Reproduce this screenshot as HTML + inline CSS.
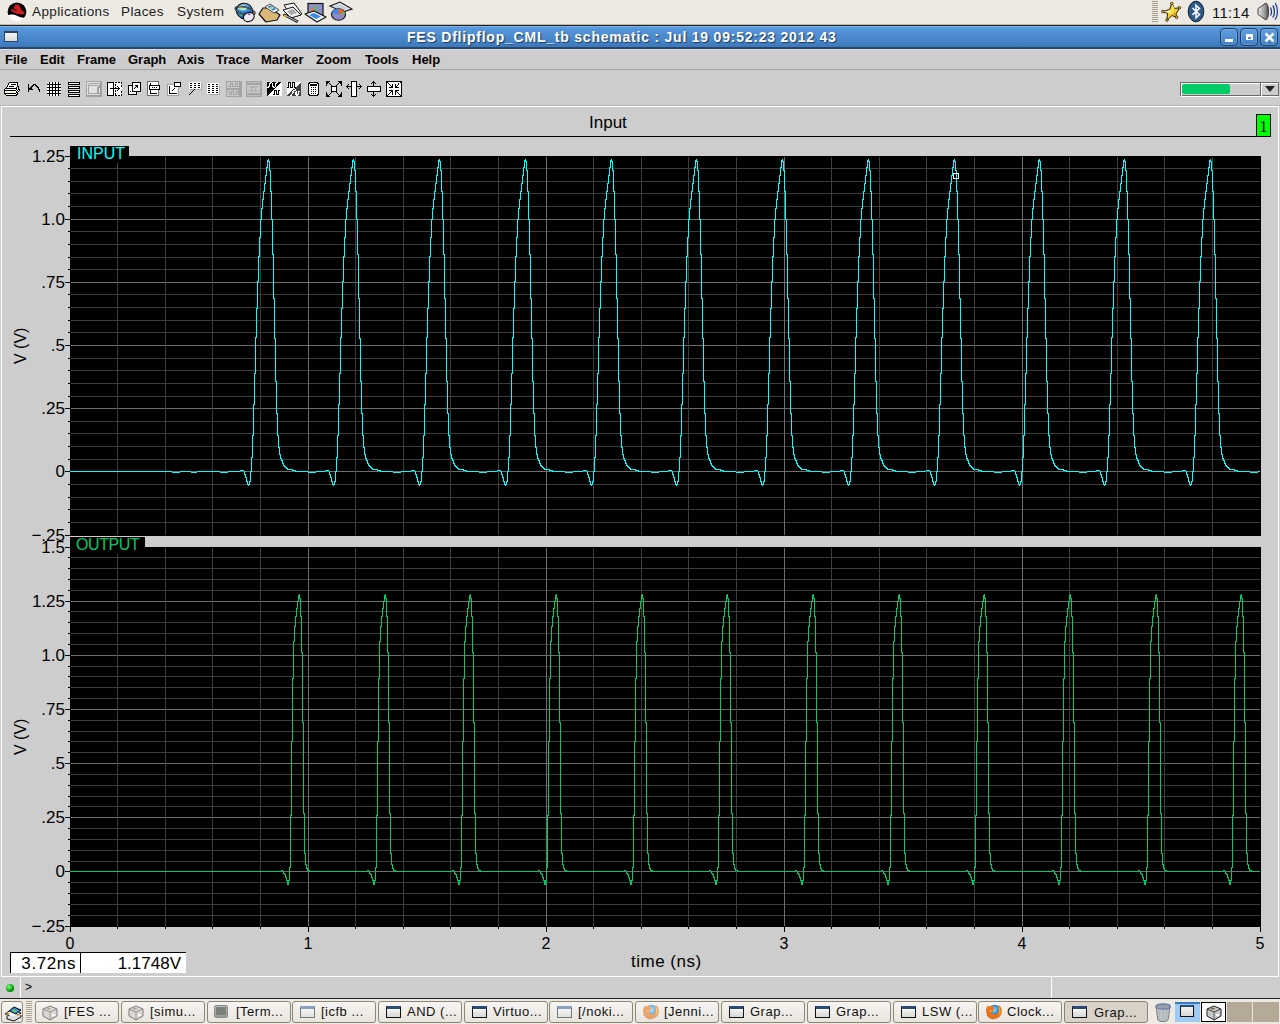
<!DOCTYPE html>
<html><head><meta charset="utf-8"><style>
*{margin:0;padding:0;box-sizing:border-box}
html,body{width:1280px;height:1024px;overflow:hidden;background:#cdcdcd;font-family:"Liberation Sans", sans-serif;position:relative}
.a{position:absolute}
#panel{left:0;top:0;width:1280px;height:26px;background:#edeae4;border-bottom:1px solid #1c2128;box-shadow:inset 0 -1px 0 #c8b8a0}
#panel .pt{position:absolute;top:3px;font-size:13.5px;color:#1a1a1a;line-height:18px;letter-spacing:0.4px}
#title{left:0;top:26px;width:1280px;height:23px;background:linear-gradient(#7ab4ee 0,#7ab4ee 1px,#5a9ade 1px,#3d78bc 21px,#26486e 21px)}
#ttext{position:absolute;left:407px;top:3px;white-space:nowrap;color:#fff;font-weight:bold;font-size:14px;letter-spacing:0.78px;line-height:16px;text-shadow:1px 1px 1px #1e3a5a}
#menubar{left:0;top:49px;width:1280px;height:21px;background:#cdcdcd;border-bottom:1px solid #a6a6a6;box-shadow:inset 0 1px 0 #dcdcdc}
.mi{position:absolute;top:3px;font-size:13px;font-weight:bold;color:#000;line-height:16px}
.yl{position:absolute;left:0;width:65px;text-align:right;font-size:17px;line-height:20px;color:#000}
.xl{position:absolute;top:934px;width:40px;text-align:center;font-size:16px;line-height:20px;color:#000}
.tbb{border:1px solid #8f8676;border-radius:3px;background:linear-gradient(#f7f5f2,#e8e4dd)}
.tbb.act{background:#d8d2c8;border-color:#8b8274}
.tbt{position:absolute;top:1004px;font-size:13px;line-height:16px;white-space:nowrap;color:#111;letter-spacing:0.5px}
</style></head><body>
<div id="panel" class="a">
  <svg class="a" style="left:0;top:0" width="32" height="25">
<defs><clipPath id="rhc"><circle cx="17" cy="11.8" r="9.4"/></clipPath></defs>
<circle cx="17" cy="11.8" r="9.4" fill="#fff"/>
<g clip-path="url(#rhc)">
<path d="M6 2h24v13c-3 2-5 3-8 2.5c-3-0.5-6-2.5-9-3c-2-0.3-4 0.5-7 1z" fill="#000"/>
<path d="M10.5 9.5c1-1 2-0.5 3-0.2c0.3-2 1-4.5 3-4.8c2-0.3 3.5 1 4 3.5c0.5 2 1.5 3 3 3.6c1.5 0.6 1.5 1.8 0.5 2.3c-2 1-5 0.5-8-0.5c-3-1-5-2.3-5.5-3.9z" fill="#cc1f24"/>
<path d="M13.3 9.3c1.2 0.4 2.2 0.8 3.3 1" stroke="#000" stroke-width="1" fill="none"/>
</g>
</svg><svg class="a" style="left:232px;top:0" width="124" height="25">
<!-- globe -->
<defs><linearGradient id="glb" x1="0" y1="0" x2="1" y2="1"><stop offset="0" stop-color="#8fd0ff"/><stop offset="0.5" stop-color="#3a8ae8"/><stop offset="1" stop-color="#0a2a8a"/></linearGradient></defs>
<ellipse cx="12.5" cy="11" rx="8.3" ry="7.6" transform="rotate(25 12.5 11)" fill="url(#glb)" stroke="#111" stroke-width="1.1"/>
<ellipse cx="10.5" cy="7.8" rx="4.6" ry="2.6" transform="rotate(10 10.5 7.8)" fill="#b0e8b0"/>
<path d="M7 13.5l3 1.5l1 1.5l-2.5-0.5z" fill="#40b050"/>
<ellipse cx="13" cy="10.8" rx="10" ry="3.6" transform="rotate(14 13 10.8)" fill="none" stroke="#111" stroke-width="1.6"/>
<ellipse cx="13" cy="10.8" rx="10" ry="3.6" transform="rotate(14 13 10.8)" fill="none" stroke="#999" stroke-width="0.6"/>
<ellipse cx="16.8" cy="17" rx="5.6" ry="4.4" transform="rotate(-25 16.8 17)" fill="#ececf0" stroke="#111" stroke-width="1.1"/>
<ellipse cx="17.3" cy="14.3" rx="1.3" ry="0.7" fill="#3a3aa8"/>
<!-- envelope -->
<path d="M27 14l4-6h7l10 7l-3 5l-11 2z" fill="#d9b878" stroke="#111" stroke-width="1.2" stroke-linejoin="round"/>
<path d="M33 7l5-3l9 6l-5 3z" fill="#fff" stroke="#333" stroke-width="0.9"/>
<path d="M35.5 7l3-1.8l5.5 3.8l-3 1.8z" fill="#3a7ad0"/>
<ellipse cx="39.5" cy="8" rx="2" ry="1.2" fill="#a8e0a0"/>
<!-- writer -->
<path d="M52 5l10-2l8 11l-10 3z" fill="#f6f6f6" stroke="#111" stroke-width="1"/>
<path d="M51 10l10-3l8 8l-10 3z" fill="#f0f0f0" stroke="#111" stroke-width="1"/>
<path d="M55 11l6-2l4 4l-6 2z" fill="#aaa"/>
<path d="M51 15l2-1l13 7l-1 1.5z" fill="#c8c8ec" stroke="#111" stroke-width="1"/>
<path d="M52 14.5l3 1.5l-1 2l-2.5-1.5z" fill="#e0b010"/>
<!-- impress -->
<rect x="76" y="3.5" width="15" height="12" fill="#8e8ec8" stroke="#111" stroke-width="1.2"/>
<rect x="79" y="8" width="2.5" height="5" fill="#f07040"/>
<rect x="82" y="5.5" width="2.5" height="7.5" fill="#50c060"/>
<path d="M73 14l9-3l12 6l-9 5z" fill="#f4f4f4" stroke="#111" stroke-width="1.2" stroke-linejoin="round"/>
<path d="M77 15l5-2l7 3.5l-5 2.5z" fill="#3a8ae8"/>
<!-- calc / pie -->
<path d="M98 6l10-4l12 7l-9 3z" fill="#e6e6e6" stroke="#111" stroke-width="1.1"/>
<path d="M101 7l7-3l8 4.5l-7 2.5z" fill="#a8c8e0" opacity="0.6"/>
<ellipse cx="106.5" cy="14.5" rx="7" ry="5.8" fill="#8a8ac8" stroke="#111" stroke-width="1.1"/>
<path d="M106.5 14.5l-6.5-2c1-3 3-4 6.5-3.8z" fill="#3a8ae8"/>
<path d="M106.5 14.5v-5.8c2.5 0 5 1.2 6 3z" fill="#f06030"/>
<path d="M106.5 14.5l6-2.8c0.5 0.8 0.7 1.6 0.7 2.4z" fill="#50c060"/>
</svg><div class="a" style="left:1152px;top:1px;width:6px;height:22px;background:repeating-linear-gradient(#a89e8e 0 1px,transparent 1px 2px)"></div>
<svg class="a" style="left:1158px;top:0" width="122" height="25">
<path d="M13.8 3.5L16.5 8.5L21.6 7.7L18.5 13L18.5 17.4L14 15.5L9 20.2L9.5 13.5L4.7 11.5L11.5 9.5z" fill="#f2d22a" stroke="#2a2410" stroke-width="1" stroke-linejoin="round"/>
<path d="M5.5 11.5L11.5 10.5L14.5 13.5z" fill="#fffbe0"/>
<path d="M14.5 13.5L18.5 13L18.5 17.4z" fill="#d89010"/>
<path d="M13.8 4L14.5 13.5L16.5 8.5z" fill="#f8e870"/>
<circle cx="13.8" cy="3.6" r="1.3" fill="#e8b820" stroke="#2a2410" stroke-width="0.8"/>
<circle cx="21.4" cy="7.8" r="1.3" fill="#e8b820" stroke="#2a2410" stroke-width="0.8"/>
<circle cx="4.8" cy="11.5" r="1.3" fill="#e8b820" stroke="#2a2410" stroke-width="0.8"/>
<circle cx="9" cy="20" r="1.3" fill="#e8b820" stroke="#2a2410" stroke-width="0.8"/>
<circle cx="18.6" cy="17.3" r="1.3" fill="#e8b820" stroke="#2a2410" stroke-width="0.8"/>
<ellipse cx="38" cy="11.5" rx="7.8" ry="10.3" fill="#2e5a86" stroke="#0c1c2c" stroke-width="1"/>
<path d="M34.5 8l7 6.5l-3.5 3.2v-12.5l3.5 3.2l-7 6.5" fill="none" stroke="#fff" stroke-width="1.5"/>
<defs><linearGradient id="spk" x1="0" y1="0" x2="1" y2="0"><stop offset="0" stop-color="#e8e8e8"/><stop offset="0.6" stop-color="#a0a0a0"/><stop offset="1" stop-color="#505050"/></linearGradient></defs>
<path d="M100 9.5c0-1.5 1-2 2.5-2.5l4.5-3.5c2-1 3.5 2 3.5 8s-1.5 9-3.5 8l-4.5-3.5c-1.5-0.5-2.5-1-2.5-2.5z" fill="url(#spk)" stroke="#2a2a2a" stroke-width="0.9"/>
<path d="M112.5 7.5c1.3 2 1.3 6 0 8M114.8 5.5c2.2 3 2.2 9 0 12M117.2 3.2c3 4 3 12.5 0 16.5" fill="none" stroke="#1c3c8c" stroke-width="1.3"/>
</svg>
<div class="a" style="left:1212px;top:4px;font-size:15px;line-height:18px;color:#111;letter-spacing:0.2px">11:14</div>
  <div class="pt" style="left:32px">Applications</div>
  <div class="pt" style="left:121px">Places</div>
  <div class="pt" style="left:177px">System</div>
</div>
<div id="title" class="a">
  <div class="a" style="left:4px;top:5px;width:14px;height:11px;background:linear-gradient(#f4f4f4,#dcdcdc);border:1px solid #28466a;border-top-width:2px"></div>
  <div id="ttext">FES Dflipflop_CML_tb schematic : Jul 19 09:52:23 2012 43</div>
  <div class="a" style="left:1220px;top:2px;width:18px;height:18px;border:1px solid #24405e;border-radius:4px;background:linear-gradient(#5f9fe0,#4080c8);box-shadow:inset 0 0 0 1px rgba(140,190,240,0.35)"></div><div class="a" style="left:1240px;top:2px;width:18px;height:18px;border:1px solid #24405e;border-radius:4px;background:linear-gradient(#5f9fe0,#4080c8);box-shadow:inset 0 0 0 1px rgba(140,190,240,0.35)"></div><div class="a" style="left:1260px;top:2px;width:18px;height:18px;border:1px solid #24405e;border-radius:4px;background:linear-gradient(#5f9fe0,#4080c8);box-shadow:inset 0 0 0 1px rgba(140,190,240,0.35)"></div><div class="a" style="left:1225px;top:13px;width:8px;height:3px;background:#fff"></div><div class="a" style="left:1246px;top:8px;width:7px;height:6px;border:2px solid #fff;border-width:3px 2px 1px 2px"></div><svg class="a" style="left:1260px;top:2px" width="20" height="20"><path d="M5.5 5.5l8 8M13.5 5.5l-8 8" stroke="#fff" stroke-width="2.6"/></svg>
</div>
<div id="menubar" class="a"><div class="mi" style="left:5px">File</div><div class="mi" style="left:40px">Edit</div><div class="mi" style="left:77px">Frame</div><div class="mi" style="left:128px">Graph</div><div class="mi" style="left:177px">Axis</div><div class="mi" style="left:216px">Trace</div><div class="mi" style="left:261px">Marker</div><div class="mi" style="left:316px">Zoom</div><div class="mi" style="left:365px">Tools</div><div class="mi" style="left:412px">Help</div></div>
<!-- graph frame -->
<div class="a" style="left:0;top:105px;width:1280px;height:1px;background:#bababa"></div>
<div class="a" style="left:1px;top:106px;width:1278px;height:871px;border:1px solid #fff"></div>
<div class="a" style="left:589px;top:113px;font-size:17px;line-height:20px;color:#000">Input</div>
<div class="a" style="left:10px;top:136px;width:1246px;height:1px;background:#000"></div>
<div class="a" style="left:1256px;top:114px;width:15px;height:23px;border:1px solid #000;background:#00ff00;font-family:'Liberation Serif',serif;font-size:16px;line-height:20px;text-align:center;padding-top:2px">1</div>
<svg class="a" style="left:0;top:0" width="1280" height="1024" shape-rendering="crispEdges"><rect x="70" y="156" width="1191" height="380" fill="#000"/><rect x="70" y="146" width="59" height="17" fill="#000"/><rect x="71" y="168" width="1189" height="1" fill="#3c3c3c"/><rect x="71" y="181" width="1189" height="1" fill="#3c3c3c"/><rect x="71" y="193" width="1189" height="1" fill="#3c3c3c"/><rect x="71" y="206" width="1189" height="1" fill="#3c3c3c"/><rect x="71" y="219" width="1189" height="1" fill="#6e6e6e"/><rect x="71" y="231" width="1189" height="1" fill="#3c3c3c"/><rect x="71" y="244" width="1189" height="1" fill="#3c3c3c"/><rect x="71" y="257" width="1189" height="1" fill="#3c3c3c"/><rect x="71" y="269" width="1189" height="1" fill="#3c3c3c"/><rect x="71" y="282" width="1189" height="1" fill="#6e6e6e"/><rect x="71" y="294" width="1189" height="1" fill="#3c3c3c"/><rect x="71" y="307" width="1189" height="1" fill="#3c3c3c"/><rect x="71" y="320" width="1189" height="1" fill="#3c3c3c"/><rect x="71" y="332" width="1189" height="1" fill="#3c3c3c"/><rect x="71" y="345" width="1189" height="1" fill="#6e6e6e"/><rect x="71" y="358" width="1189" height="1" fill="#3c3c3c"/><rect x="71" y="370" width="1189" height="1" fill="#3c3c3c"/><rect x="71" y="383" width="1189" height="1" fill="#3c3c3c"/><rect x="71" y="396" width="1189" height="1" fill="#3c3c3c"/><rect x="71" y="408" width="1189" height="1" fill="#6e6e6e"/><rect x="71" y="421" width="1189" height="1" fill="#3c3c3c"/><rect x="71" y="433" width="1189" height="1" fill="#3c3c3c"/><rect x="71" y="446" width="1189" height="1" fill="#3c3c3c"/><rect x="71" y="459" width="1189" height="1" fill="#3c3c3c"/><rect x="71" y="471" width="1189" height="1" fill="#6e6e6e"/><rect x="71" y="484" width="1189" height="1" fill="#3c3c3c"/><rect x="71" y="497" width="1189" height="1" fill="#3c3c3c"/><rect x="71" y="509" width="1189" height="1" fill="#3c3c3c"/><rect x="71" y="522" width="1189" height="1" fill="#3c3c3c"/><rect x="117" y="163" width="1" height="372" fill="#3c3c3c"/><rect x="165" y="157" width="1" height="378" fill="#3c3c3c"/><rect x="212" y="157" width="1" height="378" fill="#3c3c3c"/><rect x="260" y="157" width="1" height="378" fill="#3c3c3c"/><rect x="308" y="157" width="1" height="378" fill="#6e6e6e"/><rect x="355" y="157" width="1" height="378" fill="#3c3c3c"/><rect x="403" y="157" width="1" height="378" fill="#3c3c3c"/><rect x="450" y="157" width="1" height="378" fill="#3c3c3c"/><rect x="498" y="157" width="1" height="378" fill="#3c3c3c"/><rect x="546" y="157" width="1" height="378" fill="#6e6e6e"/><rect x="593" y="157" width="1" height="378" fill="#3c3c3c"/><rect x="641" y="157" width="1" height="378" fill="#3c3c3c"/><rect x="688" y="157" width="1" height="378" fill="#3c3c3c"/><rect x="736" y="157" width="1" height="378" fill="#3c3c3c"/><rect x="784" y="157" width="1" height="378" fill="#6e6e6e"/><rect x="831" y="157" width="1" height="378" fill="#3c3c3c"/><rect x="879" y="157" width="1" height="378" fill="#3c3c3c"/><rect x="926" y="157" width="1" height="378" fill="#3c3c3c"/><rect x="974" y="157" width="1" height="378" fill="#3c3c3c"/><rect x="1022" y="157" width="1" height="378" fill="#6e6e6e"/><rect x="1069" y="157" width="1" height="378" fill="#3c3c3c"/><rect x="1117" y="157" width="1" height="378" fill="#3c3c3c"/><rect x="1164" y="157" width="1" height="378" fill="#3c3c3c"/><rect x="1212" y="157" width="1" height="378" fill="#3c3c3c"/><rect x="65" y="156" width="5" height="1" fill="#000"/><rect x="68" y="168" width="2" height="1" fill="#000"/><rect x="68" y="181" width="2" height="1" fill="#000"/><rect x="68" y="193" width="2" height="1" fill="#000"/><rect x="68" y="206" width="2" height="1" fill="#000"/><rect x="65" y="219" width="5" height="1" fill="#000"/><rect x="68" y="231" width="2" height="1" fill="#000"/><rect x="68" y="244" width="2" height="1" fill="#000"/><rect x="68" y="257" width="2" height="1" fill="#000"/><rect x="68" y="269" width="2" height="1" fill="#000"/><rect x="65" y="282" width="5" height="1" fill="#000"/><rect x="68" y="294" width="2" height="1" fill="#000"/><rect x="68" y="307" width="2" height="1" fill="#000"/><rect x="68" y="320" width="2" height="1" fill="#000"/><rect x="68" y="332" width="2" height="1" fill="#000"/><rect x="65" y="345" width="5" height="1" fill="#000"/><rect x="68" y="358" width="2" height="1" fill="#000"/><rect x="68" y="370" width="2" height="1" fill="#000"/><rect x="68" y="383" width="2" height="1" fill="#000"/><rect x="68" y="396" width="2" height="1" fill="#000"/><rect x="65" y="408" width="5" height="1" fill="#000"/><rect x="68" y="421" width="2" height="1" fill="#000"/><rect x="68" y="433" width="2" height="1" fill="#000"/><rect x="68" y="446" width="2" height="1" fill="#000"/><rect x="68" y="459" width="2" height="1" fill="#000"/><rect x="65" y="471" width="5" height="1" fill="#000"/><rect x="68" y="484" width="2" height="1" fill="#000"/><rect x="68" y="497" width="2" height="1" fill="#000"/><rect x="68" y="509" width="2" height="1" fill="#000"/><rect x="68" y="522" width="2" height="1" fill="#000"/><rect x="65" y="535" width="5" height="1" fill="#000"/><path d="M70 471h102v1h-102zM172 472h8v1h-8zM180 471h11v1h-11zM191 472h6v1h-6zM197 471h23v1h-23zM220 472h8v1h-8zM228 471h12v1h-12zM240 470h4v1h-4zM244 471h1v4h-1zM245 474h1v4h-1zM246 477h1v5h-1zM247 481h1v4h-1zM248 484h1v2h-1zM249 481h1v4h-1zM250 471h1v11h-1zM251 457h1v15h-1zM252 435h1v23h-1zM253 404h1v32h-1zM254 373h1v32h-1zM255 337h1v37h-1zM256 308h1v30h-1zM257 281h1v28h-1zM258 256h1v26h-1zM259 237h1v20h-1zM260 219h1v19h-1zM261 208h1v12h-1zM262 199h1v10h-1zM263 191h1v9h-1zM264 183h1v9h-1zM265 175h1v9h-1zM266 167h1v9h-1zM267 160h1v8h-1zM268 159h1v3h-1zM269 161h1v10h-1zM270 170h1v22h-1zM271 191h1v29h-1zM272 219h1v36h-1zM273 254h1v45h-1zM274 298h1v41h-1zM275 338h1v44h-1zM276 381h1v33h-1zM277 413h1v23h-1zM278 435h1v13h-1zM279 447h1v8h-1zM280 454h1v5h-1zM281 458h1v3h-1zM282 460h1v4h-1zM283 463h1v3h-1zM284 465h1v2h-1zM285 466h1v2h-1zM286 467h1v2h-1zM287 468h1v2h-1zM288 469h4v1h-4zM292 469h1v2h-1zM293 470h2v1h-2zM295 470h1v2h-1zM296 471h12v1h-12zM308 472h8v1h-8zM316 471h9v1h-9zM325 470h4v1h-4zM329 471h1v4h-1zM330 474h1v4h-1zM331 477h1v5h-1zM332 481h1v4h-1zM333 484h1v2h-1zM334 481h1v4h-1zM335 471h1v11h-1zM336 457h1v15h-1zM337 435h1v23h-1zM338 404h1v32h-1zM339 373h1v32h-1zM340 337h1v37h-1zM341 308h1v30h-1zM342 281h1v28h-1zM343 256h1v26h-1zM344 237h1v20h-1zM345 219h1v19h-1zM346 208h1v12h-1zM347 199h1v10h-1zM348 191h1v9h-1zM349 183h1v9h-1zM350 175h1v9h-1zM351 167h1v9h-1zM352 160h1v8h-1zM353 159h1v3h-1zM354 161h1v10h-1zM355 170h1v22h-1zM356 191h1v29h-1zM357 219h1v36h-1zM358 254h1v45h-1zM359 298h1v41h-1zM360 338h1v44h-1zM361 381h1v33h-1zM362 413h1v23h-1zM363 435h1v13h-1zM364 447h1v8h-1zM365 454h1v5h-1zM366 458h1v3h-1zM367 460h1v4h-1zM368 463h1v3h-1zM369 465h1v2h-1zM370 466h1v2h-1zM371 467h1v2h-1zM372 468h1v2h-1zM373 469h4v1h-4zM377 469h1v2h-1zM378 470h2v1h-2zM380 470h1v2h-1zM381 471h12v1h-12zM393 472h8v1h-8zM401 471h10v1h-10zM411 470h4v1h-4zM415 471h1v4h-1zM416 474h1v4h-1zM417 477h1v5h-1zM418 481h1v4h-1zM419 484h1v2h-1zM420 481h1v4h-1zM421 471h1v11h-1zM422 457h1v15h-1zM423 435h1v23h-1zM424 404h1v32h-1zM425 373h1v32h-1zM426 337h1v37h-1zM427 308h1v30h-1zM428 281h1v28h-1zM429 256h1v26h-1zM430 237h1v20h-1zM431 219h1v19h-1zM432 208h1v12h-1zM433 199h1v10h-1zM434 191h1v9h-1zM435 183h1v9h-1zM436 175h1v9h-1zM437 167h1v9h-1zM438 160h1v8h-1zM439 159h1v3h-1zM440 161h1v10h-1zM441 170h1v22h-1zM442 191h1v29h-1zM443 219h1v36h-1zM444 254h1v45h-1zM445 298h1v41h-1zM446 338h1v44h-1zM447 381h1v33h-1zM448 413h1v23h-1zM449 435h1v13h-1zM450 447h1v8h-1zM451 454h1v5h-1zM452 458h1v3h-1zM453 460h1v4h-1zM454 463h1v3h-1zM455 465h1v2h-1zM456 466h1v2h-1zM457 467h1v2h-1zM458 468h1v2h-1zM459 469h4v1h-4zM463 469h1v2h-1zM464 470h2v1h-2zM466 470h1v2h-1zM467 471h12v1h-12zM479 472h8v1h-8zM487 471h10v1h-10zM497 470h4v1h-4zM501 471h1v4h-1zM502 474h1v4h-1zM503 477h1v5h-1zM504 481h1v4h-1zM505 484h1v2h-1zM506 481h1v4h-1zM507 471h1v11h-1zM508 457h1v15h-1zM509 435h1v23h-1zM510 404h1v32h-1zM511 373h1v32h-1zM512 337h1v37h-1zM513 308h1v30h-1zM514 281h1v28h-1zM515 256h1v26h-1zM516 237h1v20h-1zM517 219h1v19h-1zM518 208h1v12h-1zM519 199h1v10h-1zM520 191h1v9h-1zM521 183h1v9h-1zM522 175h1v9h-1zM523 167h1v9h-1zM524 160h1v8h-1zM525 159h1v3h-1zM526 161h1v10h-1zM527 170h1v22h-1zM528 191h1v29h-1zM529 219h1v36h-1zM530 254h1v45h-1zM531 298h1v41h-1zM532 338h1v44h-1zM533 381h1v33h-1zM534 413h1v23h-1zM535 435h1v13h-1zM536 447h1v8h-1zM537 454h1v5h-1zM538 458h1v3h-1zM539 460h1v4h-1zM540 463h1v3h-1zM541 465h1v2h-1zM542 466h1v2h-1zM543 467h1v2h-1zM544 468h1v2h-1zM545 469h4v1h-4zM549 469h1v2h-1zM550 470h2v1h-2zM552 470h1v2h-1zM553 471h12v1h-12zM565 472h8v1h-8zM573 471h10v1h-10zM583 470h4v1h-4zM587 471h1v4h-1zM588 474h1v4h-1zM589 477h1v5h-1zM590 481h1v4h-1zM591 484h1v2h-1zM592 481h1v4h-1zM593 471h1v11h-1zM594 457h1v15h-1zM595 435h1v23h-1zM596 404h1v32h-1zM597 373h1v32h-1zM598 337h1v37h-1zM599 308h1v30h-1zM600 281h1v28h-1zM601 256h1v26h-1zM602 237h1v20h-1zM603 219h1v19h-1zM604 208h1v12h-1zM605 199h1v10h-1zM606 191h1v9h-1zM607 183h1v9h-1zM608 175h1v9h-1zM609 167h1v9h-1zM610 160h1v8h-1zM611 159h1v3h-1zM612 161h1v10h-1zM613 170h1v22h-1zM614 191h1v29h-1zM615 219h1v36h-1zM616 254h1v45h-1zM617 298h1v41h-1zM618 338h1v44h-1zM619 381h1v33h-1zM620 413h1v23h-1zM621 435h1v13h-1zM622 447h1v8h-1zM623 454h1v5h-1zM624 458h1v3h-1zM625 460h1v4h-1zM626 463h1v3h-1zM627 465h1v2h-1zM628 466h1v2h-1zM629 467h1v2h-1zM630 468h1v2h-1zM631 469h4v1h-4zM635 469h1v2h-1zM636 470h2v1h-2zM638 470h1v2h-1zM639 471h12v1h-12zM651 472h8v1h-8zM659 471h9v1h-9zM668 470h4v1h-4zM672 471h1v4h-1zM673 474h1v4h-1zM674 477h1v5h-1zM675 481h1v4h-1zM676 484h1v2h-1zM677 481h1v4h-1zM678 471h1v11h-1zM679 457h1v15h-1zM680 435h1v23h-1zM681 404h1v32h-1zM682 373h1v32h-1zM683 337h1v37h-1zM684 308h1v30h-1zM685 281h1v28h-1zM686 256h1v26h-1zM687 237h1v20h-1zM688 219h1v19h-1zM689 208h1v12h-1zM690 199h1v10h-1zM691 191h1v9h-1zM692 183h1v9h-1zM693 175h1v9h-1zM694 167h1v9h-1zM695 160h1v8h-1zM696 159h1v3h-1zM697 161h1v10h-1zM698 170h1v22h-1zM699 191h1v29h-1zM700 219h1v36h-1zM701 254h1v45h-1zM702 298h1v41h-1zM703 338h1v44h-1zM704 381h1v33h-1zM705 413h1v23h-1zM706 435h1v13h-1zM707 447h1v8h-1zM708 454h1v5h-1zM709 458h1v3h-1zM710 460h1v4h-1zM711 463h1v3h-1zM712 465h1v2h-1zM713 466h1v2h-1zM714 467h1v2h-1zM715 468h1v2h-1zM716 469h4v1h-4zM720 469h1v2h-1zM721 470h2v1h-2zM723 470h1v2h-1zM724 471h12v1h-12zM736 472h8v1h-8zM744 471h10v1h-10zM754 470h4v1h-4zM758 471h1v4h-1zM759 474h1v4h-1zM760 477h1v5h-1zM761 481h1v4h-1zM762 484h1v2h-1zM763 481h1v4h-1zM764 471h1v11h-1zM765 457h1v15h-1zM766 435h1v23h-1zM767 404h1v32h-1zM768 373h1v32h-1zM769 337h1v37h-1zM770 308h1v30h-1zM771 281h1v28h-1zM772 256h1v26h-1zM773 237h1v20h-1zM774 219h1v19h-1zM775 208h1v12h-1zM776 199h1v10h-1zM777 191h1v9h-1zM778 183h1v9h-1zM779 175h1v9h-1zM780 167h1v9h-1zM781 160h1v8h-1zM782 159h1v3h-1zM783 161h1v10h-1zM784 170h1v22h-1zM785 191h1v29h-1zM786 219h1v36h-1zM787 254h1v45h-1zM788 298h1v41h-1zM789 338h1v44h-1zM790 381h1v33h-1zM791 413h1v23h-1zM792 435h1v13h-1zM793 447h1v8h-1zM794 454h1v5h-1zM795 458h1v3h-1zM796 460h1v4h-1zM797 463h1v3h-1zM798 465h1v2h-1zM799 466h1v2h-1zM800 467h1v2h-1zM801 468h1v2h-1zM802 469h4v1h-4zM806 469h1v2h-1zM807 470h2v1h-2zM809 470h1v2h-1zM810 471h12v1h-12zM822 472h8v1h-8zM830 471h10v1h-10zM840 470h4v1h-4zM844 471h1v4h-1zM845 474h1v4h-1zM846 477h1v5h-1zM847 481h1v4h-1zM848 484h1v2h-1zM849 481h1v4h-1zM850 471h1v11h-1zM851 457h1v15h-1zM852 435h1v23h-1zM853 404h1v32h-1zM854 373h1v32h-1zM855 337h1v37h-1zM856 308h1v30h-1zM857 281h1v28h-1zM858 256h1v26h-1zM859 237h1v20h-1zM860 219h1v19h-1zM861 208h1v12h-1zM862 199h1v10h-1zM863 191h1v9h-1zM864 183h1v9h-1zM865 175h1v9h-1zM866 167h1v9h-1zM867 160h1v8h-1zM868 159h1v3h-1zM869 161h1v10h-1zM870 170h1v22h-1zM871 191h1v29h-1zM872 219h1v36h-1zM873 254h1v45h-1zM874 298h1v41h-1zM875 338h1v44h-1zM876 381h1v33h-1zM877 413h1v23h-1zM878 435h1v13h-1zM879 447h1v8h-1zM880 454h1v5h-1zM881 458h1v3h-1zM882 460h1v4h-1zM883 463h1v3h-1zM884 465h1v2h-1zM885 466h1v2h-1zM886 467h1v2h-1zM887 468h1v2h-1zM888 469h4v1h-4zM892 469h1v2h-1zM893 470h2v1h-2zM895 470h1v2h-1zM896 471h12v1h-12zM908 472h8v1h-8zM916 471h10v1h-10zM926 470h4v1h-4zM930 471h1v4h-1zM931 474h1v4h-1zM932 477h1v5h-1zM933 481h1v4h-1zM934 484h1v2h-1zM935 481h1v4h-1zM936 471h1v11h-1zM937 457h1v15h-1zM938 435h1v23h-1zM939 404h1v32h-1zM940 373h1v32h-1zM941 337h1v37h-1zM942 308h1v30h-1zM943 281h1v28h-1zM944 256h1v26h-1zM945 237h1v20h-1zM946 219h1v19h-1zM947 208h1v12h-1zM948 199h1v10h-1zM949 191h1v9h-1zM950 183h1v9h-1zM951 175h1v9h-1zM952 167h1v9h-1zM953 160h1v8h-1zM954 159h1v3h-1zM955 161h1v10h-1zM956 170h1v22h-1zM957 191h1v29h-1zM958 219h1v36h-1zM959 254h1v45h-1zM960 298h1v41h-1zM961 338h1v44h-1zM962 381h1v33h-1zM963 413h1v23h-1zM964 435h1v13h-1zM965 447h1v8h-1zM966 454h1v5h-1zM967 458h1v3h-1zM968 460h1v4h-1zM969 463h1v3h-1zM970 465h1v2h-1zM971 466h1v2h-1zM972 467h1v2h-1zM973 468h1v2h-1zM974 469h4v1h-4zM978 469h1v2h-1zM979 470h2v1h-2zM981 470h1v2h-1zM982 471h12v1h-12zM994 472h8v1h-8zM1002 471h9v1h-9zM1011 470h4v1h-4zM1015 471h1v4h-1zM1016 474h1v4h-1zM1017 477h1v5h-1zM1018 481h1v4h-1zM1019 484h1v2h-1zM1020 481h1v4h-1zM1021 471h1v11h-1zM1022 457h1v15h-1zM1023 435h1v23h-1zM1024 404h1v32h-1zM1025 373h1v32h-1zM1026 337h1v37h-1zM1027 308h1v30h-1zM1028 281h1v28h-1zM1029 256h1v26h-1zM1030 237h1v20h-1zM1031 219h1v19h-1zM1032 208h1v12h-1zM1033 199h1v10h-1zM1034 191h1v9h-1zM1035 183h1v9h-1zM1036 175h1v9h-1zM1037 167h1v9h-1zM1038 160h1v8h-1zM1039 159h1v3h-1zM1040 161h1v10h-1zM1041 170h1v22h-1zM1042 191h1v29h-1zM1043 219h1v36h-1zM1044 254h1v45h-1zM1045 298h1v41h-1zM1046 338h1v44h-1zM1047 381h1v33h-1zM1048 413h1v23h-1zM1049 435h1v13h-1zM1050 447h1v8h-1zM1051 454h1v5h-1zM1052 458h1v3h-1zM1053 460h1v4h-1zM1054 463h1v3h-1zM1055 465h1v2h-1zM1056 466h1v2h-1zM1057 467h1v2h-1zM1058 468h1v2h-1zM1059 469h4v1h-4zM1063 469h1v2h-1zM1064 470h2v1h-2zM1066 470h1v2h-1zM1067 471h12v1h-12zM1079 472h8v1h-8zM1087 471h9v1h-9zM1096 470h4v1h-4zM1100 471h1v4h-1zM1101 474h1v4h-1zM1102 477h1v5h-1zM1103 481h1v4h-1zM1104 484h1v2h-1zM1105 481h1v4h-1zM1106 471h1v11h-1zM1107 457h1v15h-1zM1108 435h1v23h-1zM1109 404h1v32h-1zM1110 373h1v32h-1zM1111 337h1v37h-1zM1112 308h1v30h-1zM1113 281h1v28h-1zM1114 256h1v26h-1zM1115 237h1v20h-1zM1116 219h1v19h-1zM1117 208h1v12h-1zM1118 199h1v10h-1zM1119 191h1v9h-1zM1120 183h1v9h-1zM1121 175h1v9h-1zM1122 167h1v9h-1zM1123 160h1v8h-1zM1124 159h1v3h-1zM1125 161h1v10h-1zM1126 170h1v22h-1zM1127 191h1v29h-1zM1128 219h1v36h-1zM1129 254h1v45h-1zM1130 298h1v41h-1zM1131 338h1v44h-1zM1132 381h1v33h-1zM1133 413h1v23h-1zM1134 435h1v13h-1zM1135 447h1v8h-1zM1136 454h1v5h-1zM1137 458h1v3h-1zM1138 460h1v4h-1zM1139 463h1v3h-1zM1140 465h1v2h-1zM1141 466h1v2h-1zM1142 467h1v2h-1zM1143 468h1v2h-1zM1144 469h4v1h-4zM1148 469h1v2h-1zM1149 470h2v1h-2zM1151 470h1v2h-1zM1152 471h12v1h-12zM1164 472h8v1h-8zM1172 471h10v1h-10zM1182 470h4v1h-4zM1186 471h1v4h-1zM1187 474h1v4h-1zM1188 477h1v5h-1zM1189 481h1v4h-1zM1190 484h1v2h-1zM1191 481h1v4h-1zM1192 471h1v11h-1zM1193 457h1v15h-1zM1194 435h1v23h-1zM1195 404h1v32h-1zM1196 373h1v32h-1zM1197 337h1v37h-1zM1198 308h1v30h-1zM1199 281h1v28h-1zM1200 256h1v26h-1zM1201 237h1v20h-1zM1202 219h1v19h-1zM1203 208h1v12h-1zM1204 199h1v10h-1zM1205 191h1v9h-1zM1206 183h1v9h-1zM1207 175h1v9h-1zM1208 167h1v9h-1zM1209 160h1v8h-1zM1210 159h1v3h-1zM1211 161h1v10h-1zM1212 170h1v22h-1zM1213 191h1v29h-1zM1214 219h1v36h-1zM1215 254h1v45h-1zM1216 298h1v41h-1zM1217 338h1v44h-1zM1218 381h1v33h-1zM1219 413h1v23h-1zM1220 435h1v13h-1zM1221 447h1v8h-1zM1222 454h1v5h-1zM1223 458h1v3h-1zM1224 460h1v4h-1zM1225 463h1v3h-1zM1226 465h1v2h-1zM1227 466h1v2h-1zM1228 467h1v2h-1zM1229 468h1v2h-1zM1230 469h4v1h-4zM1234 469h1v2h-1zM1235 470h2v1h-2zM1237 470h1v2h-1zM1238 471h12v1h-12zM1250 472h8v1h-8zM1258 471h2v1h-2z" fill="#00ffff"/><rect x="70" y="547" width="1191" height="380" fill="#000"/><rect x="70" y="537" width="75" height="17" fill="#000"/><rect x="71" y="557" width="1189" height="1" fill="#3c3c3c"/><rect x="71" y="568" width="1189" height="1" fill="#3c3c3c"/><rect x="71" y="579" width="1189" height="1" fill="#3c3c3c"/><rect x="71" y="590" width="1189" height="1" fill="#3c3c3c"/><rect x="71" y="601" width="1189" height="1" fill="#6e6e6e"/><rect x="71" y="611" width="1189" height="1" fill="#3c3c3c"/><rect x="71" y="622" width="1189" height="1" fill="#3c3c3c"/><rect x="71" y="633" width="1189" height="1" fill="#3c3c3c"/><rect x="71" y="644" width="1189" height="1" fill="#3c3c3c"/><rect x="71" y="655" width="1189" height="1" fill="#6e6e6e"/><rect x="71" y="666" width="1189" height="1" fill="#3c3c3c"/><rect x="71" y="676" width="1189" height="1" fill="#3c3c3c"/><rect x="71" y="687" width="1189" height="1" fill="#3c3c3c"/><rect x="71" y="698" width="1189" height="1" fill="#3c3c3c"/><rect x="71" y="709" width="1189" height="1" fill="#6e6e6e"/><rect x="71" y="720" width="1189" height="1" fill="#3c3c3c"/><rect x="71" y="731" width="1189" height="1" fill="#3c3c3c"/><rect x="71" y="741" width="1189" height="1" fill="#3c3c3c"/><rect x="71" y="752" width="1189" height="1" fill="#3c3c3c"/><rect x="71" y="763" width="1189" height="1" fill="#6e6e6e"/><rect x="71" y="774" width="1189" height="1" fill="#3c3c3c"/><rect x="71" y="785" width="1189" height="1" fill="#3c3c3c"/><rect x="71" y="796" width="1189" height="1" fill="#3c3c3c"/><rect x="71" y="806" width="1189" height="1" fill="#3c3c3c"/><rect x="71" y="817" width="1189" height="1" fill="#6e6e6e"/><rect x="71" y="828" width="1189" height="1" fill="#3c3c3c"/><rect x="71" y="839" width="1189" height="1" fill="#3c3c3c"/><rect x="71" y="850" width="1189" height="1" fill="#3c3c3c"/><rect x="71" y="861" width="1189" height="1" fill="#3c3c3c"/><rect x="71" y="871" width="1189" height="1" fill="#6e6e6e"/><rect x="71" y="882" width="1189" height="1" fill="#3c3c3c"/><rect x="71" y="893" width="1189" height="1" fill="#3c3c3c"/><rect x="71" y="904" width="1189" height="1" fill="#3c3c3c"/><rect x="71" y="915" width="1189" height="1" fill="#3c3c3c"/><rect x="117" y="554" width="1" height="372" fill="#3c3c3c"/><rect x="165" y="548" width="1" height="378" fill="#3c3c3c"/><rect x="212" y="548" width="1" height="378" fill="#3c3c3c"/><rect x="260" y="548" width="1" height="378" fill="#3c3c3c"/><rect x="308" y="548" width="1" height="378" fill="#6e6e6e"/><rect x="355" y="548" width="1" height="378" fill="#3c3c3c"/><rect x="403" y="548" width="1" height="378" fill="#3c3c3c"/><rect x="450" y="548" width="1" height="378" fill="#3c3c3c"/><rect x="498" y="548" width="1" height="378" fill="#3c3c3c"/><rect x="546" y="548" width="1" height="378" fill="#6e6e6e"/><rect x="593" y="548" width="1" height="378" fill="#3c3c3c"/><rect x="641" y="548" width="1" height="378" fill="#3c3c3c"/><rect x="688" y="548" width="1" height="378" fill="#3c3c3c"/><rect x="736" y="548" width="1" height="378" fill="#3c3c3c"/><rect x="784" y="548" width="1" height="378" fill="#6e6e6e"/><rect x="831" y="548" width="1" height="378" fill="#3c3c3c"/><rect x="879" y="548" width="1" height="378" fill="#3c3c3c"/><rect x="926" y="548" width="1" height="378" fill="#3c3c3c"/><rect x="974" y="548" width="1" height="378" fill="#3c3c3c"/><rect x="1022" y="548" width="1" height="378" fill="#6e6e6e"/><rect x="1069" y="548" width="1" height="378" fill="#3c3c3c"/><rect x="1117" y="548" width="1" height="378" fill="#3c3c3c"/><rect x="1164" y="548" width="1" height="378" fill="#3c3c3c"/><rect x="1212" y="548" width="1" height="378" fill="#3c3c3c"/><rect x="65" y="547" width="5" height="1" fill="#000"/><rect x="68" y="557" width="2" height="1" fill="#000"/><rect x="68" y="568" width="2" height="1" fill="#000"/><rect x="68" y="579" width="2" height="1" fill="#000"/><rect x="68" y="590" width="2" height="1" fill="#000"/><rect x="65" y="601" width="5" height="1" fill="#000"/><rect x="68" y="611" width="2" height="1" fill="#000"/><rect x="68" y="622" width="2" height="1" fill="#000"/><rect x="68" y="633" width="2" height="1" fill="#000"/><rect x="68" y="644" width="2" height="1" fill="#000"/><rect x="65" y="655" width="5" height="1" fill="#000"/><rect x="68" y="666" width="2" height="1" fill="#000"/><rect x="68" y="676" width="2" height="1" fill="#000"/><rect x="68" y="687" width="2" height="1" fill="#000"/><rect x="68" y="698" width="2" height="1" fill="#000"/><rect x="65" y="709" width="5" height="1" fill="#000"/><rect x="68" y="720" width="2" height="1" fill="#000"/><rect x="68" y="731" width="2" height="1" fill="#000"/><rect x="68" y="741" width="2" height="1" fill="#000"/><rect x="68" y="752" width="2" height="1" fill="#000"/><rect x="65" y="763" width="5" height="1" fill="#000"/><rect x="68" y="774" width="2" height="1" fill="#000"/><rect x="68" y="785" width="2" height="1" fill="#000"/><rect x="68" y="796" width="2" height="1" fill="#000"/><rect x="68" y="806" width="2" height="1" fill="#000"/><rect x="65" y="817" width="5" height="1" fill="#000"/><rect x="68" y="828" width="2" height="1" fill="#000"/><rect x="68" y="839" width="2" height="1" fill="#000"/><rect x="68" y="850" width="2" height="1" fill="#000"/><rect x="68" y="861" width="2" height="1" fill="#000"/><rect x="65" y="871" width="5" height="1" fill="#000"/><rect x="68" y="882" width="2" height="1" fill="#000"/><rect x="68" y="893" width="2" height="1" fill="#000"/><rect x="68" y="904" width="2" height="1" fill="#000"/><rect x="68" y="915" width="2" height="1" fill="#000"/><rect x="65" y="926" width="5" height="1" fill="#000"/><path d="M70 871h211v1h-211zM281 870h2v1h-2zM283 871h1v3h-1zM284 873h1v2h-1zM285 874h1v4h-1zM286 877h1v4h-1zM287 880h1v5h-1zM288 880h1v5h-1zM289 867h1v14h-1zM290 815h1v53h-1zM291 741h1v75h-1zM292 678h1v64h-1zM293 641h1v38h-1zM294 626h1v16h-1zM295 616h1v11h-1zM296 608h1v9h-1zM297 601h1v8h-1zM298 595h1v7h-1zM299 594h1v5h-1zM300 598h1v19h-1zM301 616h1v37h-1zM302 652h1v71h-1zM303 722h1v92h-1zM304 813h1v41h-1zM305 853h1v12h-1zM306 864h1v5h-1zM307 868h1v3h-1zM308 870h1v1h-1zM309 870h1v2h-1zM310 871h57v1h-57zM367 870h2v1h-2zM369 871h1v3h-1zM370 873h1v2h-1zM371 874h1v4h-1zM372 877h1v4h-1zM373 880h1v5h-1zM374 880h1v5h-1zM375 867h1v14h-1zM376 815h1v53h-1zM377 741h1v75h-1zM378 678h1v64h-1zM379 641h1v38h-1zM380 626h1v16h-1zM381 616h1v11h-1zM382 608h1v9h-1zM383 601h1v8h-1zM384 595h1v7h-1zM385 594h1v5h-1zM386 598h1v19h-1zM387 616h1v37h-1zM388 652h1v71h-1zM389 722h1v92h-1zM390 813h1v41h-1zM391 853h1v12h-1zM392 864h1v5h-1zM393 868h1v3h-1zM394 870h1v1h-1zM395 870h1v2h-1zM396 871h56v1h-56zM452 870h2v1h-2zM454 871h1v3h-1zM455 873h1v2h-1zM456 874h1v4h-1zM457 877h1v4h-1zM458 880h1v5h-1zM459 880h1v5h-1zM460 867h1v14h-1zM461 815h1v53h-1zM462 741h1v75h-1zM463 678h1v64h-1zM464 641h1v38h-1zM465 626h1v16h-1zM466 616h1v11h-1zM467 608h1v9h-1zM468 601h1v8h-1zM469 595h1v7h-1zM470 594h1v5h-1zM471 598h1v19h-1zM472 616h1v37h-1zM473 652h1v71h-1zM474 722h1v92h-1zM475 813h1v41h-1zM476 853h1v12h-1zM477 864h1v5h-1zM478 868h1v3h-1zM479 870h1v1h-1zM480 870h1v2h-1zM481 871h57v1h-57zM538 870h2v1h-2zM540 871h1v3h-1zM541 873h1v2h-1zM542 874h1v4h-1zM543 877h1v4h-1zM544 880h1v5h-1zM545 880h1v5h-1zM546 867h1v14h-1zM547 815h1v53h-1zM548 741h1v75h-1zM549 678h1v64h-1zM550 641h1v38h-1zM551 626h1v16h-1zM552 616h1v11h-1zM553 608h1v9h-1zM554 601h1v8h-1zM555 595h1v7h-1zM556 594h1v5h-1zM557 598h1v19h-1zM558 616h1v37h-1zM559 652h1v71h-1zM560 722h1v92h-1zM561 813h1v41h-1zM562 853h1v12h-1zM563 864h1v5h-1zM564 868h1v3h-1zM565 870h1v1h-1zM566 870h1v2h-1zM567 871h57v1h-57zM624 870h2v1h-2zM626 871h1v3h-1zM627 873h1v2h-1zM628 874h1v4h-1zM629 877h1v4h-1zM630 880h1v5h-1zM631 880h1v5h-1zM632 867h1v14h-1zM633 815h1v53h-1zM634 741h1v75h-1zM635 678h1v64h-1zM636 641h1v38h-1zM637 626h1v16h-1zM638 616h1v11h-1zM639 608h1v9h-1zM640 601h1v8h-1zM641 595h1v7h-1zM642 594h1v5h-1zM643 598h1v19h-1zM644 616h1v37h-1zM645 652h1v71h-1zM646 722h1v92h-1zM647 813h1v41h-1zM648 853h1v12h-1zM649 864h1v5h-1zM650 868h1v3h-1zM651 870h1v1h-1zM652 870h1v2h-1zM653 871h56v1h-56zM709 870h2v1h-2zM711 871h1v3h-1zM712 873h1v2h-1zM713 874h1v4h-1zM714 877h1v4h-1zM715 880h1v5h-1zM716 880h1v5h-1zM717 867h1v14h-1zM718 815h1v53h-1zM719 741h1v75h-1zM720 678h1v64h-1zM721 641h1v38h-1zM722 626h1v16h-1zM723 616h1v11h-1zM724 608h1v9h-1zM725 601h1v8h-1zM726 595h1v7h-1zM727 594h1v5h-1zM728 598h1v19h-1zM729 616h1v37h-1zM730 652h1v71h-1zM731 722h1v92h-1zM732 813h1v41h-1zM733 853h1v12h-1zM734 864h1v5h-1zM735 868h1v3h-1zM736 870h1v1h-1zM737 870h1v2h-1zM738 871h57v1h-57zM795 870h2v1h-2zM797 871h1v3h-1zM798 873h1v2h-1zM799 874h1v4h-1zM800 877h1v4h-1zM801 880h1v5h-1zM802 880h1v5h-1zM803 867h1v14h-1zM804 815h1v53h-1zM805 741h1v75h-1zM806 678h1v64h-1zM807 641h1v38h-1zM808 626h1v16h-1zM809 616h1v11h-1zM810 608h1v9h-1zM811 601h1v8h-1zM812 595h1v7h-1zM813 594h1v5h-1zM814 598h1v19h-1zM815 616h1v37h-1zM816 652h1v71h-1zM817 722h1v92h-1zM818 813h1v41h-1zM819 853h1v12h-1zM820 864h1v5h-1zM821 868h1v3h-1zM822 870h1v1h-1zM823 870h1v2h-1zM824 871h57v1h-57zM881 870h2v1h-2zM883 871h1v3h-1zM884 873h1v2h-1zM885 874h1v4h-1zM886 877h1v4h-1zM887 880h1v5h-1zM888 880h1v5h-1zM889 867h1v14h-1zM890 815h1v53h-1zM891 741h1v75h-1zM892 678h1v64h-1zM893 641h1v38h-1zM894 626h1v16h-1zM895 616h1v11h-1zM896 608h1v9h-1zM897 601h1v8h-1zM898 595h1v7h-1zM899 594h1v5h-1zM900 598h1v19h-1zM901 616h1v37h-1zM902 652h1v71h-1zM903 722h1v92h-1zM904 813h1v41h-1zM905 853h1v12h-1zM906 864h1v5h-1zM907 868h1v3h-1zM908 870h1v1h-1zM909 870h1v2h-1zM910 871h56v1h-56zM966 870h2v1h-2zM968 871h1v3h-1zM969 873h1v2h-1zM970 874h1v4h-1zM971 877h1v4h-1zM972 880h1v5h-1zM973 880h1v5h-1zM974 867h1v14h-1zM975 815h1v53h-1zM976 741h1v75h-1zM977 678h1v64h-1zM978 641h1v38h-1zM979 626h1v16h-1zM980 616h1v11h-1zM981 608h1v9h-1zM982 601h1v8h-1zM983 595h1v7h-1zM984 594h1v5h-1zM985 598h1v19h-1zM986 616h1v37h-1zM987 652h1v71h-1zM988 722h1v92h-1zM989 813h1v41h-1zM990 853h1v12h-1zM991 864h1v5h-1zM992 868h1v3h-1zM993 870h1v1h-1zM994 870h1v2h-1zM995 871h57v1h-57zM1052 870h2v1h-2zM1054 871h1v3h-1zM1055 873h1v2h-1zM1056 874h1v4h-1zM1057 877h1v4h-1zM1058 880h1v5h-1zM1059 880h1v5h-1zM1060 867h1v14h-1zM1061 815h1v53h-1zM1062 741h1v75h-1zM1063 678h1v64h-1zM1064 641h1v38h-1zM1065 626h1v16h-1zM1066 616h1v11h-1zM1067 608h1v9h-1zM1068 601h1v8h-1zM1069 595h1v7h-1zM1070 594h1v5h-1zM1071 598h1v19h-1zM1072 616h1v37h-1zM1073 652h1v71h-1zM1074 722h1v92h-1zM1075 813h1v41h-1zM1076 853h1v12h-1zM1077 864h1v5h-1zM1078 868h1v3h-1zM1079 870h1v1h-1zM1080 870h1v2h-1zM1081 871h57v1h-57zM1138 870h2v1h-2zM1140 871h1v3h-1zM1141 873h1v2h-1zM1142 874h1v4h-1zM1143 877h1v4h-1zM1144 880h1v5h-1zM1145 880h1v5h-1zM1146 867h1v14h-1zM1147 815h1v53h-1zM1148 741h1v75h-1zM1149 678h1v64h-1zM1150 641h1v38h-1zM1151 626h1v16h-1zM1152 616h1v11h-1zM1153 608h1v9h-1zM1154 601h1v8h-1zM1155 595h1v7h-1zM1156 594h1v5h-1zM1157 598h1v19h-1zM1158 616h1v37h-1zM1159 652h1v71h-1zM1160 722h1v92h-1zM1161 813h1v41h-1zM1162 853h1v12h-1zM1163 864h1v5h-1zM1164 868h1v3h-1zM1165 870h1v1h-1zM1166 870h1v2h-1zM1167 871h56v1h-56zM1223 870h2v1h-2zM1225 871h1v3h-1zM1226 873h1v2h-1zM1227 874h1v4h-1zM1228 877h1v4h-1zM1229 880h1v5h-1zM1230 880h1v5h-1zM1231 867h1v14h-1zM1232 815h1v53h-1zM1233 741h1v75h-1zM1234 678h1v64h-1zM1235 641h1v38h-1zM1236 626h1v16h-1zM1237 616h1v11h-1zM1238 608h1v9h-1zM1239 601h1v8h-1zM1240 595h1v7h-1zM1241 594h1v5h-1zM1242 598h1v19h-1zM1243 616h1v37h-1zM1244 652h1v71h-1zM1245 722h1v92h-1zM1246 813h1v41h-1zM1247 853h1v12h-1zM1248 864h1v5h-1zM1249 868h1v3h-1zM1250 870h1v1h-1zM1251 870h1v2h-1zM1252 871h8v1h-8z" fill="#00cc66"/><rect x="70" y="927" width="1" height="5" fill="#000"/><rect x="117" y="927" width="1" height="2" fill="#000"/><rect x="165" y="927" width="1" height="2" fill="#000"/><rect x="212" y="927" width="1" height="2" fill="#000"/><rect x="260" y="927" width="1" height="2" fill="#000"/><rect x="308" y="927" width="1" height="5" fill="#000"/><rect x="355" y="927" width="1" height="2" fill="#000"/><rect x="403" y="927" width="1" height="2" fill="#000"/><rect x="450" y="927" width="1" height="2" fill="#000"/><rect x="498" y="927" width="1" height="2" fill="#000"/><rect x="546" y="927" width="1" height="5" fill="#000"/><rect x="593" y="927" width="1" height="2" fill="#000"/><rect x="641" y="927" width="1" height="2" fill="#000"/><rect x="688" y="927" width="1" height="2" fill="#000"/><rect x="736" y="927" width="1" height="2" fill="#000"/><rect x="784" y="927" width="1" height="5" fill="#000"/><rect x="831" y="927" width="1" height="2" fill="#000"/><rect x="879" y="927" width="1" height="2" fill="#000"/><rect x="926" y="927" width="1" height="2" fill="#000"/><rect x="974" y="927" width="1" height="2" fill="#000"/><rect x="1022" y="927" width="1" height="5" fill="#000"/><rect x="1069" y="927" width="1" height="2" fill="#000"/><rect x="1117" y="927" width="1" height="2" fill="#000"/><rect x="1164" y="927" width="1" height="2" fill="#000"/><rect x="1212" y="927" width="1" height="2" fill="#000"/><rect x="1260" y="927" width="1" height="5" fill="#000"/><path d="M953 173h5v5h-5z" fill="none" stroke="#fff" stroke-width="1" transform="translate(0.5 0.5)"/><rect x="9" y="82" width="9" height="1" fill="#000"/><rect x="8" y="83" width="1" height="1" fill="#000"/><rect x="9" y="83" width="8" height="1" fill="#fff"/><rect x="17" y="83" width="1" height="1" fill="#000"/><rect x="8" y="84" width="1" height="1" fill="#000"/><rect x="9" y="84" width="2" height="1" fill="#fff"/><rect x="11" y="84" width="5" height="1" fill="#000"/><rect x="16" y="84" width="1" height="1" fill="#fff"/><rect x="17" y="84" width="1" height="1" fill="#000"/><rect x="7" y="85" width="1" height="1" fill="#000"/><rect x="8" y="85" width="9" height="1" fill="#fff"/><rect x="17" y="85" width="1" height="1" fill="#000"/><rect x="7" y="86" width="1" height="1" fill="#000"/><rect x="8" y="86" width="1" height="1" fill="#fff"/><rect x="9" y="86" width="5" height="1" fill="#000"/><rect x="14" y="86" width="3" height="1" fill="#fff"/><rect x="17" y="86" width="2" height="1" fill="#000"/><rect x="6" y="87" width="1" height="1" fill="#000"/><rect x="7" y="87" width="9" height="1" fill="#fff"/><rect x="16" y="87" width="1" height="1" fill="#000"/><rect x="17" y="87" width="1" height="1" fill="#fff"/><rect x="18" y="87" width="1" height="1" fill="#000"/><rect x="5" y="88" width="12" height="1" fill="#000"/><rect x="17" y="88" width="1" height="1" fill="#fff"/><rect x="18" y="88" width="1" height="1" fill="#000"/><rect x="4" y="89" width="1" height="1" fill="#000"/><rect x="5" y="89" width="11" height="1" fill="#fff"/><rect x="16" y="89" width="1" height="1" fill="#000"/><rect x="17" y="89" width="1" height="1" fill="#fff"/><rect x="18" y="89" width="2" height="1" fill="#000"/><rect x="4" y="90" width="12" height="1" fill="#000"/><rect x="16" y="90" width="1" height="1" fill="#fff"/><rect x="17" y="90" width="1" height="1" fill="#000"/><rect x="18" y="90" width="1" height="1" fill="#fff"/><rect x="19" y="90" width="1" height="1" fill="#000"/><rect x="4" y="91" width="1" height="1" fill="#000"/><rect x="5" y="91" width="11" height="1" fill="#fff"/><rect x="16" y="91" width="1" height="1" fill="#000"/><rect x="17" y="91" width="1" height="1" fill="#fff"/><rect x="18" y="91" width="1" height="1" fill="#000"/><rect x="4" y="92" width="1" height="1" fill="#000"/><rect x="5" y="92" width="6" height="1" fill="#fff"/><rect x="11" y="92" width="3" height="1" fill="#f0f000"/><rect x="14" y="92" width="2" height="1" fill="#fff"/><rect x="16" y="92" width="2" height="1" fill="#000"/><rect x="4" y="93" width="12" height="1" fill="#000"/><rect x="16" y="93" width="1" height="1" fill="#fff"/><rect x="17" y="93" width="1" height="1" fill="#000"/><rect x="5" y="94" width="1" height="1" fill="#000"/><rect x="6" y="94" width="10" height="1" fill="#fff"/><rect x="16" y="94" width="2" height="1" fill="#000"/><rect x="6" y="95" width="11" height="1" fill="#000"/><rect x="28" y="84" width="1" height="1" fill="#000"/><rect x="33" y="84" width="3" height="1" fill="#000"/><rect x="28" y="85" width="1" height="1" fill="#000"/><rect x="32" y="85" width="2" height="1" fill="#000"/><rect x="35" y="85" width="2" height="1" fill="#000"/><rect x="28" y="86" width="1" height="1" fill="#000"/><rect x="31" y="86" width="2" height="1" fill="#000"/><rect x="36" y="86" width="2" height="1" fill="#000"/><rect x="28" y="87" width="1" height="1" fill="#000"/><rect x="30" y="87" width="2" height="1" fill="#000"/><rect x="37" y="87" width="2" height="1" fill="#000"/><rect x="28" y="88" width="4" height="1" fill="#000"/><rect x="38" y="88" width="1" height="1" fill="#000"/><rect x="28" y="89" width="5" height="1" fill="#000"/><rect x="38" y="89" width="2" height="1" fill="#000"/><rect x="28" y="90" width="1" height="1" fill="#000"/><rect x="39" y="90" width="1" height="1" fill="#000"/><rect x="28" y="91" width="1" height="1" fill="#000"/><rect x="39" y="91" width="1" height="1" fill="#000"/><rect x="49" y="82" width="1" height="1" fill="#000"/><rect x="50" y="82" width="2" height="1" fill="#fff"/><rect x="52" y="82" width="1" height="1" fill="#000"/><rect x="53" y="82" width="2" height="1" fill="#fff"/><rect x="55" y="82" width="1" height="1" fill="#000"/><rect x="56" y="82" width="2" height="1" fill="#fff"/><rect x="58" y="82" width="1" height="1" fill="#000"/><rect x="48" y="83" width="1" height="1" fill="#fff"/><rect x="49" y="83" width="1" height="1" fill="#000"/><rect x="50" y="83" width="2" height="1" fill="#fff"/><rect x="52" y="83" width="1" height="1" fill="#000"/><rect x="53" y="83" width="2" height="1" fill="#fff"/><rect x="55" y="83" width="1" height="1" fill="#000"/><rect x="56" y="83" width="2" height="1" fill="#fff"/><rect x="58" y="83" width="1" height="1" fill="#000"/><rect x="59" y="83" width="1" height="1" fill="#fff"/><rect x="47" y="84" width="14" height="1" fill="#000"/><rect x="47" y="85" width="2" height="1" fill="#fff"/><rect x="49" y="85" width="1" height="1" fill="#000"/><rect x="50" y="85" width="2" height="1" fill="#fff"/><rect x="52" y="85" width="1" height="1" fill="#000"/><rect x="53" y="85" width="2" height="1" fill="#fff"/><rect x="55" y="85" width="1" height="1" fill="#000"/><rect x="56" y="85" width="2" height="1" fill="#fff"/><rect x="58" y="85" width="1" height="1" fill="#000"/><rect x="59" y="85" width="2" height="1" fill="#fff"/><rect x="47" y="86" width="2" height="1" fill="#fff"/><rect x="49" y="86" width="1" height="1" fill="#000"/><rect x="50" y="86" width="2" height="1" fill="#fff"/><rect x="52" y="86" width="1" height="1" fill="#000"/><rect x="53" y="86" width="2" height="1" fill="#fff"/><rect x="55" y="86" width="1" height="1" fill="#000"/><rect x="56" y="86" width="2" height="1" fill="#fff"/><rect x="58" y="86" width="1" height="1" fill="#000"/><rect x="59" y="86" width="2" height="1" fill="#fff"/><rect x="47" y="87" width="14" height="1" fill="#000"/><rect x="47" y="88" width="2" height="1" fill="#fff"/><rect x="49" y="88" width="1" height="1" fill="#000"/><rect x="50" y="88" width="2" height="1" fill="#fff"/><rect x="52" y="88" width="1" height="1" fill="#000"/><rect x="53" y="88" width="2" height="1" fill="#fff"/><rect x="55" y="88" width="1" height="1" fill="#000"/><rect x="56" y="88" width="2" height="1" fill="#fff"/><rect x="58" y="88" width="1" height="1" fill="#000"/><rect x="59" y="88" width="2" height="1" fill="#fff"/><rect x="47" y="89" width="2" height="1" fill="#fff"/><rect x="49" y="89" width="1" height="1" fill="#000"/><rect x="50" y="89" width="2" height="1" fill="#fff"/><rect x="52" y="89" width="1" height="1" fill="#000"/><rect x="53" y="89" width="2" height="1" fill="#fff"/><rect x="55" y="89" width="1" height="1" fill="#000"/><rect x="56" y="89" width="2" height="1" fill="#fff"/><rect x="58" y="89" width="1" height="1" fill="#000"/><rect x="59" y="89" width="2" height="1" fill="#fff"/><rect x="47" y="90" width="14" height="1" fill="#000"/><rect x="47" y="91" width="2" height="1" fill="#fff"/><rect x="49" y="91" width="1" height="1" fill="#000"/><rect x="50" y="91" width="2" height="1" fill="#fff"/><rect x="52" y="91" width="1" height="1" fill="#000"/><rect x="53" y="91" width="2" height="1" fill="#fff"/><rect x="55" y="91" width="1" height="1" fill="#000"/><rect x="56" y="91" width="2" height="1" fill="#fff"/><rect x="58" y="91" width="1" height="1" fill="#000"/><rect x="59" y="91" width="2" height="1" fill="#fff"/><rect x="47" y="92" width="2" height="1" fill="#fff"/><rect x="49" y="92" width="1" height="1" fill="#000"/><rect x="50" y="92" width="2" height="1" fill="#fff"/><rect x="52" y="92" width="1" height="1" fill="#000"/><rect x="53" y="92" width="2" height="1" fill="#fff"/><rect x="55" y="92" width="1" height="1" fill="#000"/><rect x="56" y="92" width="2" height="1" fill="#fff"/><rect x="58" y="92" width="1" height="1" fill="#000"/><rect x="59" y="92" width="2" height="1" fill="#fff"/><rect x="47" y="93" width="14" height="1" fill="#000"/><rect x="48" y="94" width="1" height="1" fill="#fff"/><rect x="49" y="94" width="1" height="1" fill="#000"/><rect x="50" y="94" width="2" height="1" fill="#fff"/><rect x="52" y="94" width="1" height="1" fill="#000"/><rect x="53" y="94" width="2" height="1" fill="#fff"/><rect x="55" y="94" width="1" height="1" fill="#000"/><rect x="56" y="94" width="2" height="1" fill="#fff"/><rect x="58" y="94" width="1" height="1" fill="#000"/><rect x="59" y="94" width="1" height="1" fill="#fff"/><rect x="49" y="95" width="1" height="1" fill="#000"/><rect x="50" y="95" width="2" height="1" fill="#fff"/><rect x="52" y="95" width="1" height="1" fill="#000"/><rect x="53" y="95" width="2" height="1" fill="#fff"/><rect x="55" y="95" width="1" height="1" fill="#000"/><rect x="56" y="95" width="2" height="1" fill="#fff"/><rect x="58" y="95" width="1" height="1" fill="#000"/><rect x="68" y="82" width="12" height="3" fill="#000"/><rect x="69" y="83" width="10" height="1" fill="#fff"/><rect x="68" y="86" width="12" height="3" fill="#000"/><rect x="69" y="87" width="10" height="1" fill="#fff"/><rect x="68" y="90" width="12" height="3" fill="#000"/><rect x="69" y="91" width="10" height="1" fill="#fff"/><rect x="68" y="94" width="12" height="3" fill="#000"/><rect x="69" y="95" width="10" height="1" fill="#fff"/><rect x="86" y="81" width="16" height="1" fill="#a4a4a4"/><rect x="86" y="82" width="1" height="1" fill="#a4a4a4"/><rect x="87" y="82" width="13" height="1" fill="#e2e2e2"/><rect x="100" y="82" width="1" height="1" fill="#9a9a9a"/><rect x="101" y="82" width="1" height="1" fill="#a4a4a4"/><rect x="86" y="83" width="1" height="1" fill="#a4a4a4"/><rect x="87" y="83" width="2" height="1" fill="#e2e2e2"/><rect x="89" y="83" width="10" height="1" fill="#a4a4a4"/><rect x="99" y="83" width="1" height="1" fill="#e2e2e2"/><rect x="100" y="83" width="1" height="1" fill="#9a9a9a"/><rect x="101" y="83" width="1" height="1" fill="#a4a4a4"/><rect x="86" y="84" width="1" height="1" fill="#a4a4a4"/><rect x="87" y="84" width="1" height="1" fill="#e2e2e2"/><rect x="88" y="84" width="1" height="1" fill="#a4a4a4"/><rect x="89" y="84" width="10" height="1" fill="#e2e2e2"/><rect x="99" y="84" width="1" height="1" fill="#a4a4a4"/><rect x="100" y="84" width="1" height="1" fill="#9a9a9a"/><rect x="101" y="84" width="1" height="1" fill="#a4a4a4"/><rect x="86" y="85" width="1" height="1" fill="#a4a4a4"/><rect x="87" y="85" width="1" height="1" fill="#e2e2e2"/><rect x="88" y="85" width="10" height="1" fill="#a4a4a4"/><rect x="98" y="85" width="1" height="1" fill="#e2e2e2"/><rect x="99" y="85" width="1" height="1" fill="#a4a4a4"/><rect x="100" y="85" width="1" height="1" fill="#9a9a9a"/><rect x="101" y="85" width="1" height="1" fill="#a4a4a4"/><rect x="86" y="86" width="1" height="1" fill="#a4a4a4"/><rect x="87" y="86" width="1" height="1" fill="#e2e2e2"/><rect x="88" y="86" width="1" height="1" fill="#a4a4a4"/><rect x="89" y="86" width="9" height="1" fill="#e2e2e2"/><rect x="98" y="86" width="2" height="1" fill="#a4a4a4"/><rect x="100" y="86" width="1" height="1" fill="#9a9a9a"/><rect x="101" y="86" width="1" height="1" fill="#a4a4a4"/><rect x="86" y="87" width="1" height="1" fill="#a4a4a4"/><rect x="87" y="87" width="1" height="1" fill="#e2e2e2"/><rect x="88" y="87" width="1" height="1" fill="#a4a4a4"/><rect x="89" y="87" width="8" height="1" fill="#e2e2e2"/><rect x="97" y="87" width="2" height="1" fill="#a4a4a4"/><rect x="99" y="87" width="1" height="1" fill="#9a9a9a"/><rect x="100" y="87" width="2" height="1" fill="#a4a4a4"/><rect x="86" y="88" width="1" height="1" fill="#a4a4a4"/><rect x="87" y="88" width="1" height="1" fill="#e2e2e2"/><rect x="88" y="88" width="1" height="1" fill="#a4a4a4"/><rect x="89" y="88" width="8" height="1" fill="#e2e2e2"/><rect x="97" y="88" width="1" height="1" fill="#a4a4a4"/><rect x="98" y="88" width="1" height="1" fill="#9a9a9a"/><rect x="99" y="88" width="1" height="1" fill="#e2e2e2"/><rect x="100" y="88" width="1" height="1" fill="#9a9a9a"/><rect x="101" y="88" width="1" height="1" fill="#a4a4a4"/><rect x="86" y="89" width="1" height="1" fill="#a4a4a4"/><rect x="87" y="89" width="1" height="1" fill="#e2e2e2"/><rect x="88" y="89" width="1" height="1" fill="#a4a4a4"/><rect x="89" y="89" width="8" height="1" fill="#e2e2e2"/><rect x="97" y="89" width="1" height="1" fill="#a4a4a4"/><rect x="98" y="89" width="1" height="1" fill="#9a9a9a"/><rect x="99" y="89" width="1" height="1" fill="#e2e2e2"/><rect x="100" y="89" width="1" height="1" fill="#9a9a9a"/><rect x="101" y="89" width="1" height="1" fill="#a4a4a4"/><rect x="86" y="90" width="1" height="1" fill="#a4a4a4"/><rect x="87" y="90" width="1" height="1" fill="#e2e2e2"/><rect x="88" y="90" width="1" height="1" fill="#a4a4a4"/><rect x="89" y="90" width="8" height="1" fill="#e2e2e2"/><rect x="97" y="90" width="1" height="1" fill="#a4a4a4"/><rect x="98" y="90" width="1" height="1" fill="#9a9a9a"/><rect x="99" y="90" width="1" height="1" fill="#e2e2e2"/><rect x="100" y="90" width="1" height="1" fill="#9a9a9a"/><rect x="101" y="90" width="1" height="1" fill="#a4a4a4"/><rect x="86" y="91" width="1" height="1" fill="#a4a4a4"/><rect x="87" y="91" width="1" height="1" fill="#e2e2e2"/><rect x="88" y="91" width="1" height="1" fill="#a4a4a4"/><rect x="89" y="91" width="8" height="1" fill="#e2e2e2"/><rect x="97" y="91" width="1" height="1" fill="#a4a4a4"/><rect x="98" y="91" width="1" height="1" fill="#9a9a9a"/><rect x="99" y="91" width="1" height="1" fill="#e2e2e2"/><rect x="100" y="91" width="1" height="1" fill="#9a9a9a"/><rect x="101" y="91" width="1" height="1" fill="#a4a4a4"/><rect x="86" y="92" width="1" height="1" fill="#a4a4a4"/><rect x="87" y="92" width="1" height="1" fill="#e2e2e2"/><rect x="88" y="92" width="1" height="1" fill="#a4a4a4"/><rect x="89" y="92" width="8" height="1" fill="#e2e2e2"/><rect x="97" y="92" width="1" height="1" fill="#a4a4a4"/><rect x="98" y="92" width="1" height="1" fill="#9a9a9a"/><rect x="99" y="92" width="1" height="1" fill="#e2e2e2"/><rect x="100" y="92" width="1" height="1" fill="#9a9a9a"/><rect x="101" y="92" width="1" height="1" fill="#a4a4a4"/><rect x="86" y="93" width="1" height="1" fill="#a4a4a4"/><rect x="87" y="93" width="1" height="1" fill="#e2e2e2"/><rect x="88" y="93" width="11" height="1" fill="#a4a4a4"/><rect x="99" y="93" width="2" height="1" fill="#9a9a9a"/><rect x="101" y="93" width="1" height="1" fill="#a4a4a4"/><rect x="86" y="94" width="1" height="1" fill="#a4a4a4"/><rect x="87" y="94" width="13" height="1" fill="#e2e2e2"/><rect x="100" y="94" width="1" height="1" fill="#9a9a9a"/><rect x="101" y="94" width="1" height="1" fill="#a4a4a4"/><rect x="86" y="95" width="1" height="1" fill="#a4a4a4"/><rect x="87" y="95" width="14" height="1" fill="#9a9a9a"/><rect x="101" y="95" width="1" height="1" fill="#a4a4a4"/><rect x="86" y="96" width="16" height="1" fill="#a4a4a4"/><rect x="107" y="82" width="7" height="14" fill="#000"/><rect x="108" y="83" width="5" height="12" fill="#fff"/><rect x="114" y="82" width="8" height="14" fill="#fff"/><rect x="115" y="82" width="2" height="1" fill="#000"/><rect x="118" y="82" width="2" height="1" fill="#000"/><rect x="115" y="95" width="2" height="1" fill="#000"/><rect x="118" y="95" width="2" height="1" fill="#000"/><rect x="121" y="82" width="1" height="2" fill="#000"/><rect x="121" y="85" width="1" height="2" fill="#000"/><rect x="121" y="91" width="1" height="2" fill="#000"/><rect x="121" y="94" width="1" height="2" fill="#000"/><rect x="115" y="84" width="1" height="2" fill="#000"/><rect x="115" y="87" width="1" height="2" fill="#000"/><rect x="115" y="90" width="1" height="2" fill="#000"/><rect x="115" y="93" width="1" height="2" fill="#000"/><rect x="110" y="88" width="10" height="1" fill="#000"/><rect x="117" y="86" width="1" height="1" fill="#000"/><rect x="118" y="87" width="1" height="3" fill="#000"/><rect x="117" y="90" width="1" height="1" fill="#000"/><rect x="119" y="88" width="1" height="1" fill="#000"/><rect x="128" y="85" width="9" height="10" fill="#000"/><rect x="129" y="86" width="7" height="8" fill="#fff"/><rect x="132" y="82" width="9" height="10" fill="#000"/><rect x="133" y="83" width="7" height="8" fill="#fff"/><rect x="130" y="91" width="1" height="1" fill="#000"/><rect x="132" y="89" width="1" height="1" fill="#000"/><rect x="134" y="88" width="1" height="1" fill="#000"/><rect x="135" y="87" width="1" height="1" fill="#000"/><rect x="135" y="85" width="3" height="1" fill="#000"/><rect x="136" y="86" width="2" height="1" fill="#000"/><rect x="137" y="87" width="1" height="1" fill="#000"/><rect x="147" y="81" width="12" height="15" fill="#6c6c6c"/><rect x="148" y="82" width="10" height="13" fill="#fff"/><rect x="150" y="83" width="1" height="2" fill="#000"/><rect x="149" y="85" width="11" height="5" fill="#000"/><rect x="150" y="86" width="9" height="3" fill="#fff"/><rect x="152" y="87" width="1" height="1" fill="#000"/><rect x="154" y="87" width="1" height="1" fill="#000"/><rect x="156" y="87" width="1" height="1" fill="#000"/><rect x="150" y="90" width="1" height="4" fill="#000"/><rect x="150" y="93" width="7" height="1" fill="#000"/><rect x="167" y="84" width="12" height="12" fill="#a0a0a0"/><rect x="168" y="85" width="10" height="10" fill="#fff"/><rect x="169" y="86" width="1" height="8" fill="#000"/><rect x="169" y="93" width="8" height="1" fill="#000"/><rect x="172" y="90" width="1" height="1" fill="#000"/><rect x="173" y="89" width="1" height="1" fill="#000"/><rect x="174" y="88" width="1" height="1" fill="#000"/><rect x="174" y="82" width="7" height="5" fill="#000"/><rect x="175" y="83" width="5" height="3" fill="#fff"/><rect x="190" y="83" width="12" height="7" fill="#a8a8a8"/><rect x="189" y="82" width="12" height="7" fill="#fff"/><rect x="190" y="83" width="2" height="1" fill="#000"/><rect x="190" y="85" width="2" height="1" fill="#000"/><rect x="190" y="87" width="2" height="1" fill="#000"/><rect x="194" y="83" width="2" height="1" fill="#000"/><rect x="194" y="85" width="2" height="1" fill="#000"/><rect x="194" y="87" width="2" height="1" fill="#000"/><rect x="198" y="83" width="2" height="1" fill="#000"/><rect x="198" y="85" width="2" height="1" fill="#000"/><rect x="198" y="87" width="2" height="1" fill="#000"/><rect x="189" y="94" width="1" height="1" fill="#000"/><rect x="190" y="93" width="1" height="1" fill="#000"/><rect x="191" y="92" width="1" height="1" fill="#000"/><rect x="192" y="91" width="1" height="1" fill="#000"/><rect x="193" y="90" width="1" height="1" fill="#000"/><rect x="194" y="89" width="1" height="1" fill="#000"/><rect x="209" y="85" width="11" height="10" fill="#a8a8a8"/><rect x="207" y="83" width="12" height="11" fill="#fff"/><rect x="208" y="84" width="2" height="1" fill="#000"/><rect x="208" y="86" width="2" height="1" fill="#000"/><rect x="208" y="88" width="2" height="1" fill="#000"/><rect x="208" y="90" width="2" height="1" fill="#000"/><rect x="208" y="92" width="2" height="1" fill="#000"/><rect x="212" y="84" width="2" height="1" fill="#000"/><rect x="212" y="86" width="2" height="1" fill="#000"/><rect x="212" y="88" width="2" height="1" fill="#000"/><rect x="212" y="90" width="2" height="1" fill="#000"/><rect x="212" y="92" width="2" height="1" fill="#000"/><rect x="216" y="84" width="2" height="1" fill="#000"/><rect x="216" y="86" width="2" height="1" fill="#000"/><rect x="216" y="88" width="2" height="1" fill="#000"/><rect x="216" y="90" width="2" height="1" fill="#000"/><rect x="216" y="92" width="2" height="1" fill="#000"/><rect x="226" y="81" width="16" height="16" fill="#a4a4a4"/><rect x="227" y="82" width="12" height="6" fill="#c8c8c8"/><rect x="227" y="90" width="12" height="6" fill="#c8c8c8"/><rect x="230" y="83" width="3" height="1" fill="#a4a4a4"/><rect x="235" y="83" width="3" height="1" fill="#a4a4a4"/><rect x="230" y="84" width="1" height="1" fill="#a4a4a4"/><rect x="232" y="84" width="1" height="1" fill="#a4a4a4"/><rect x="235" y="84" width="1" height="1" fill="#a4a4a4"/><rect x="237" y="84" width="1" height="1" fill="#a4a4a4"/><rect x="230" y="85" width="1" height="1" fill="#a4a4a4"/><rect x="232" y="85" width="1" height="1" fill="#a4a4a4"/><rect x="235" y="85" width="1" height="1" fill="#a4a4a4"/><rect x="237" y="85" width="1" height="1" fill="#a4a4a4"/><rect x="228" y="86" width="3" height="1" fill="#a4a4a4"/><rect x="232" y="86" width="4" height="1" fill="#a4a4a4"/><rect x="237" y="86" width="3" height="1" fill="#a4a4a4"/><rect x="228" y="91" width="2" height="1" fill="#a4a4a4"/><rect x="231" y="91" width="3" height="1" fill="#a4a4a4"/><rect x="236" y="91" width="3" height="1" fill="#a4a4a4"/><rect x="229" y="92" width="1" height="1" fill="#a4a4a4"/><rect x="231" y="92" width="1" height="1" fill="#a4a4a4"/><rect x="233" y="92" width="1" height="1" fill="#a4a4a4"/><rect x="236" y="92" width="1" height="1" fill="#a4a4a4"/><rect x="238" y="92" width="1" height="1" fill="#a4a4a4"/><rect x="229" y="93" width="1" height="1" fill="#a4a4a4"/><rect x="231" y="93" width="1" height="1" fill="#a4a4a4"/><rect x="233" y="93" width="1" height="1" fill="#a4a4a4"/><rect x="236" y="93" width="1" height="1" fill="#a4a4a4"/><rect x="238" y="93" width="1" height="1" fill="#a4a4a4"/><rect x="229" y="94" width="3" height="1" fill="#a4a4a4"/><rect x="233" y="94" width="4" height="1" fill="#a4a4a4"/><rect x="238" y="94" width="2" height="1" fill="#a4a4a4"/><rect x="246" y="81" width="16" height="16" fill="#a4a4a4"/><rect x="247" y="82" width="13" height="1" fill="#bcbcbc"/><rect x="247" y="85" width="13" height="8" fill="#c8c8c8"/><rect x="247" y="95" width="13" height="1" fill="#bcbcbc"/><rect x="249" y="86" width="1" height="1" fill="#a4a4a4"/><rect x="251" y="86" width="1" height="1" fill="#a4a4a4"/><rect x="255" y="86" width="1" height="1" fill="#a4a4a4"/><rect x="257" y="86" width="1" height="1" fill="#a4a4a4"/><rect x="250" y="87" width="1" height="1" fill="#a4a4a4"/><rect x="252" y="87" width="3" height="1" fill="#a4a4a4"/><rect x="256" y="87" width="1" height="1" fill="#a4a4a4"/><rect x="251" y="88" width="1" height="1" fill="#a4a4a4"/><rect x="255" y="88" width="1" height="1" fill="#a4a4a4"/><rect x="251" y="89" width="1" height="1" fill="#a4a4a4"/><rect x="255" y="89" width="1" height="1" fill="#a4a4a4"/><rect x="250" y="90" width="1" height="1" fill="#a4a4a4"/><rect x="252" y="90" width="3" height="1" fill="#a4a4a4"/><rect x="256" y="90" width="1" height="1" fill="#a4a4a4"/><rect x="249" y="91" width="1" height="1" fill="#a4a4a4"/><rect x="251" y="91" width="1" height="1" fill="#a4a4a4"/><rect x="255" y="91" width="1" height="1" fill="#a4a4a4"/><rect x="257" y="91" width="1" height="1" fill="#a4a4a4"/><rect x="267" y="82" width="3" height="1" fill="#000"/><rect x="270" y="82" width="2" height="1" fill="#fff"/><rect x="272" y="82" width="4" height="1" fill="#000"/><rect x="276" y="82" width="2" height="1" fill="#fff"/><rect x="278" y="82" width="3" height="1" fill="#000"/><rect x="281" y="82" width="1" height="1" fill="#fff"/><rect x="267" y="83" width="2" height="1" fill="#000"/><rect x="269" y="83" width="2" height="1" fill="#fff"/><rect x="271" y="83" width="1" height="1" fill="#000"/><rect x="272" y="83" width="1" height="1" fill="#fff"/><rect x="273" y="83" width="2" height="1" fill="#000"/><rect x="275" y="83" width="2" height="1" fill="#fff"/><rect x="277" y="83" width="3" height="1" fill="#000"/><rect x="280" y="83" width="2" height="1" fill="#fff"/><rect x="267" y="84" width="2" height="1" fill="#000"/><rect x="269" y="84" width="1" height="1" fill="#fff"/><rect x="270" y="84" width="2" height="1" fill="#000"/><rect x="272" y="84" width="1" height="1" fill="#fff"/><rect x="273" y="84" width="2" height="1" fill="#000"/><rect x="275" y="84" width="1" height="1" fill="#fff"/><rect x="276" y="84" width="3" height="1" fill="#000"/><rect x="279" y="84" width="3" height="1" fill="#fff"/><rect x="267" y="85" width="2" height="1" fill="#000"/><rect x="269" y="85" width="1" height="1" fill="#fff"/><rect x="270" y="85" width="2" height="1" fill="#000"/><rect x="272" y="85" width="1" height="1" fill="#fff"/><rect x="273" y="85" width="2" height="1" fill="#000"/><rect x="275" y="85" width="1" height="1" fill="#fff"/><rect x="276" y="85" width="2" height="1" fill="#000"/><rect x="278" y="85" width="4" height="1" fill="#fff"/><rect x="267" y="86" width="1" height="1" fill="#000"/><rect x="268" y="86" width="2" height="1" fill="#fff"/><rect x="270" y="86" width="2" height="1" fill="#000"/><rect x="272" y="86" width="2" height="1" fill="#fff"/><rect x="274" y="86" width="1" height="1" fill="#000"/><rect x="275" y="86" width="1" height="1" fill="#fff"/><rect x="276" y="86" width="1" height="1" fill="#000"/><rect x="277" y="86" width="5" height="1" fill="#fff"/><rect x="267" y="87" width="2" height="1" fill="#fff"/><rect x="269" y="87" width="4" height="1" fill="#000"/><rect x="273" y="87" width="2" height="1" fill="#fff"/><rect x="275" y="87" width="1" height="1" fill="#000"/><rect x="276" y="87" width="6" height="1" fill="#fff"/><rect x="267" y="88" width="8" height="1" fill="#000"/><rect x="275" y="88" width="7" height="1" fill="#fff"/><rect x="267" y="89" width="7" height="1" fill="#000"/><rect x="274" y="89" width="8" height="1" fill="#fff"/><rect x="267" y="90" width="6" height="1" fill="#000"/><rect x="273" y="90" width="1" height="1" fill="#fff"/><rect x="274" y="90" width="3" height="1" fill="#000"/><rect x="277" y="90" width="1" height="1" fill="#fff"/><rect x="278" y="90" width="2" height="1" fill="#000"/><rect x="280" y="90" width="2" height="1" fill="#fff"/><rect x="267" y="91" width="5" height="1" fill="#000"/><rect x="272" y="91" width="2" height="1" fill="#fff"/><rect x="274" y="91" width="1" height="1" fill="#000"/><rect x="275" y="91" width="1" height="1" fill="#fff"/><rect x="276" y="91" width="1" height="1" fill="#000"/><rect x="277" y="91" width="1" height="1" fill="#fff"/><rect x="278" y="91" width="1" height="1" fill="#000"/><rect x="279" y="91" width="3" height="1" fill="#fff"/><rect x="267" y="92" width="4" height="1" fill="#000"/><rect x="271" y="92" width="3" height="1" fill="#fff"/><rect x="274" y="92" width="1" height="1" fill="#000"/><rect x="275" y="92" width="1" height="1" fill="#fff"/><rect x="276" y="92" width="1" height="1" fill="#000"/><rect x="277" y="92" width="1" height="1" fill="#fff"/><rect x="278" y="92" width="1" height="1" fill="#000"/><rect x="279" y="92" width="3" height="1" fill="#fff"/><rect x="267" y="93" width="3" height="1" fill="#000"/><rect x="270" y="93" width="4" height="1" fill="#fff"/><rect x="274" y="93" width="1" height="1" fill="#000"/><rect x="275" y="93" width="1" height="1" fill="#fff"/><rect x="276" y="93" width="1" height="1" fill="#000"/><rect x="277" y="93" width="1" height="1" fill="#fff"/><rect x="278" y="93" width="1" height="1" fill="#000"/><rect x="279" y="93" width="3" height="1" fill="#fff"/><rect x="267" y="94" width="2" height="1" fill="#000"/><rect x="269" y="94" width="4" height="1" fill="#fff"/><rect x="273" y="94" width="2" height="1" fill="#000"/><rect x="275" y="94" width="1" height="1" fill="#fff"/><rect x="276" y="94" width="3" height="1" fill="#000"/><rect x="279" y="94" width="3" height="1" fill="#fff"/><rect x="267" y="95" width="1" height="1" fill="#000"/><rect x="268" y="95" width="14" height="1" fill="#fff"/><rect x="287" y="82" width="1" height="1" fill="#fff"/><rect x="288" y="82" width="3" height="1" fill="#000"/><rect x="291" y="82" width="1" height="1" fill="#fff"/><rect x="292" y="82" width="3" height="1" fill="#000"/><rect x="295" y="82" width="6" height="1" fill="#fff"/><rect x="287" y="83" width="1" height="1" fill="#fff"/><rect x="288" y="83" width="1" height="1" fill="#000"/><rect x="289" y="83" width="1" height="1" fill="#fff"/><rect x="290" y="83" width="1" height="1" fill="#000"/><rect x="291" y="83" width="1" height="1" fill="#fff"/><rect x="292" y="83" width="1" height="1" fill="#000"/><rect x="293" y="83" width="1" height="1" fill="#fff"/><rect x="294" y="83" width="1" height="1" fill="#000"/><rect x="295" y="83" width="5" height="1" fill="#fff"/><rect x="300" y="83" width="1" height="1" fill="#404040"/><rect x="287" y="84" width="1" height="1" fill="#fff"/><rect x="288" y="84" width="1" height="1" fill="#000"/><rect x="289" y="84" width="1" height="1" fill="#fff"/><rect x="290" y="84" width="1" height="1" fill="#000"/><rect x="291" y="84" width="1" height="1" fill="#fff"/><rect x="292" y="84" width="1" height="1" fill="#000"/><rect x="293" y="84" width="1" height="1" fill="#fff"/><rect x="294" y="84" width="1" height="1" fill="#000"/><rect x="295" y="84" width="4" height="1" fill="#fff"/><rect x="299" y="84" width="2" height="1" fill="#404040"/><rect x="287" y="85" width="1" height="1" fill="#fff"/><rect x="288" y="85" width="1" height="1" fill="#000"/><rect x="289" y="85" width="1" height="1" fill="#fff"/><rect x="290" y="85" width="1" height="1" fill="#000"/><rect x="291" y="85" width="1" height="1" fill="#fff"/><rect x="292" y="85" width="1" height="1" fill="#000"/><rect x="293" y="85" width="1" height="1" fill="#fff"/><rect x="294" y="85" width="1" height="1" fill="#000"/><rect x="295" y="85" width="3" height="1" fill="#fff"/><rect x="298" y="85" width="3" height="1" fill="#404040"/><rect x="287" y="86" width="1" height="1" fill="#fff"/><rect x="288" y="86" width="1" height="1" fill="#000"/><rect x="289" y="86" width="1" height="1" fill="#fff"/><rect x="290" y="86" width="1" height="1" fill="#000"/><rect x="291" y="86" width="1" height="1" fill="#fff"/><rect x="292" y="86" width="1" height="1" fill="#000"/><rect x="293" y="86" width="1" height="1" fill="#fff"/><rect x="294" y="86" width="1" height="1" fill="#000"/><rect x="295" y="86" width="2" height="1" fill="#fff"/><rect x="297" y="86" width="4" height="1" fill="#404040"/><rect x="287" y="87" width="2" height="1" fill="#000"/><rect x="289" y="87" width="1" height="1" fill="#fff"/><rect x="290" y="87" width="3" height="1" fill="#000"/><rect x="293" y="87" width="1" height="1" fill="#fff"/><rect x="294" y="87" width="2" height="1" fill="#000"/><rect x="296" y="87" width="5" height="1" fill="#404040"/><rect x="287" y="88" width="8" height="1" fill="#fff"/><rect x="295" y="88" width="6" height="1" fill="#404040"/><rect x="287" y="89" width="6" height="1" fill="#fff"/><rect x="293" y="89" width="2" height="1" fill="#404040"/><rect x="295" y="89" width="1" height="1" fill="#fff"/><rect x="296" y="89" width="5" height="1" fill="#404040"/><rect x="287" y="90" width="5" height="1" fill="#fff"/><rect x="292" y="90" width="1" height="1" fill="#404040"/><rect x="293" y="90" width="3" height="1" fill="#fff"/><rect x="296" y="90" width="5" height="1" fill="#404040"/><rect x="287" y="91" width="4" height="1" fill="#fff"/><rect x="291" y="91" width="1" height="1" fill="#404040"/><rect x="292" y="91" width="2" height="1" fill="#fff"/><rect x="294" y="91" width="2" height="1" fill="#404040"/><rect x="296" y="91" width="1" height="1" fill="#fff"/><rect x="297" y="91" width="1" height="1" fill="#404040"/><rect x="298" y="91" width="2" height="1" fill="#fff"/><rect x="300" y="91" width="1" height="1" fill="#404040"/><rect x="287" y="92" width="3" height="1" fill="#fff"/><rect x="290" y="92" width="2" height="1" fill="#404040"/><rect x="292" y="92" width="2" height="1" fill="#fff"/><rect x="294" y="92" width="1" height="1" fill="#404040"/><rect x="295" y="92" width="2" height="1" fill="#fff"/><rect x="297" y="92" width="1" height="1" fill="#404040"/><rect x="298" y="92" width="1" height="1" fill="#fff"/><rect x="299" y="92" width="2" height="1" fill="#404040"/><rect x="287" y="93" width="2" height="1" fill="#fff"/><rect x="289" y="93" width="3" height="1" fill="#404040"/><rect x="292" y="93" width="1" height="1" fill="#fff"/><rect x="293" y="93" width="2" height="1" fill="#404040"/><rect x="295" y="93" width="2" height="1" fill="#fff"/><rect x="297" y="93" width="1" height="1" fill="#404040"/><rect x="298" y="93" width="1" height="1" fill="#fff"/><rect x="299" y="93" width="2" height="1" fill="#404040"/><rect x="287" y="94" width="1" height="1" fill="#fff"/><rect x="288" y="94" width="3" height="1" fill="#404040"/><rect x="291" y="94" width="1" height="1" fill="#fff"/><rect x="292" y="94" width="3" height="1" fill="#404040"/><rect x="295" y="94" width="4" height="1" fill="#fff"/><rect x="299" y="94" width="2" height="1" fill="#404040"/><rect x="287" y="95" width="3" height="1" fill="#404040"/><rect x="290" y="95" width="2" height="1" fill="#fff"/><rect x="292" y="95" width="4" height="1" fill="#404040"/><rect x="296" y="95" width="2" height="1" fill="#fff"/><rect x="298" y="95" width="3" height="1" fill="#404040"/><rect x="309" y="82" width="9" height="1" fill="#000"/><rect x="308" y="83" width="2" height="1" fill="#000"/><rect x="310" y="83" width="7" height="1" fill="#fff"/><rect x="317" y="83" width="2" height="1" fill="#000"/><rect x="308" y="84" width="1" height="1" fill="#000"/><rect x="309" y="84" width="1" height="1" fill="#fff"/><rect x="310" y="84" width="7" height="1" fill="#000"/><rect x="317" y="84" width="1" height="1" fill="#fff"/><rect x="318" y="84" width="1" height="1" fill="#000"/><rect x="308" y="85" width="1" height="1" fill="#000"/><rect x="309" y="85" width="1" height="1" fill="#fff"/><rect x="310" y="85" width="7" height="1" fill="#000"/><rect x="317" y="85" width="1" height="1" fill="#fff"/><rect x="318" y="85" width="1" height="1" fill="#000"/><rect x="308" y="86" width="1" height="1" fill="#000"/><rect x="309" y="86" width="9" height="1" fill="#fff"/><rect x="318" y="86" width="1" height="1" fill="#000"/><rect x="308" y="87" width="1" height="1" fill="#000"/><rect x="309" y="87" width="2" height="1" fill="#fff"/><rect x="311" y="87" width="1" height="1" fill="#000"/><rect x="312" y="87" width="1" height="1" fill="#fff"/><rect x="313" y="87" width="1" height="1" fill="#000"/><rect x="314" y="87" width="1" height="1" fill="#fff"/><rect x="315" y="87" width="1" height="1" fill="#000"/><rect x="316" y="87" width="2" height="1" fill="#fff"/><rect x="318" y="87" width="1" height="1" fill="#000"/><rect x="308" y="88" width="1" height="1" fill="#000"/><rect x="309" y="88" width="9" height="1" fill="#fff"/><rect x="318" y="88" width="1" height="1" fill="#000"/><rect x="308" y="89" width="1" height="1" fill="#000"/><rect x="309" y="89" width="2" height="1" fill="#fff"/><rect x="311" y="89" width="1" height="1" fill="#000"/><rect x="312" y="89" width="1" height="1" fill="#fff"/><rect x="313" y="89" width="1" height="1" fill="#000"/><rect x="314" y="89" width="1" height="1" fill="#fff"/><rect x="315" y="89" width="1" height="1" fill="#000"/><rect x="316" y="89" width="2" height="1" fill="#fff"/><rect x="318" y="89" width="1" height="1" fill="#000"/><rect x="308" y="90" width="1" height="1" fill="#000"/><rect x="309" y="90" width="9" height="1" fill="#fff"/><rect x="318" y="90" width="1" height="1" fill="#000"/><rect x="308" y="91" width="1" height="1" fill="#000"/><rect x="309" y="91" width="2" height="1" fill="#fff"/><rect x="311" y="91" width="1" height="1" fill="#000"/><rect x="312" y="91" width="1" height="1" fill="#fff"/><rect x="313" y="91" width="1" height="1" fill="#000"/><rect x="314" y="91" width="1" height="1" fill="#fff"/><rect x="315" y="91" width="1" height="1" fill="#000"/><rect x="316" y="91" width="2" height="1" fill="#fff"/><rect x="318" y="91" width="1" height="1" fill="#000"/><rect x="308" y="92" width="1" height="1" fill="#000"/><rect x="309" y="92" width="9" height="1" fill="#fff"/><rect x="318" y="92" width="1" height="1" fill="#000"/><rect x="308" y="93" width="1" height="1" fill="#000"/><rect x="309" y="93" width="2" height="1" fill="#fff"/><rect x="311" y="93" width="1" height="1" fill="#000"/><rect x="312" y="93" width="1" height="1" fill="#fff"/><rect x="313" y="93" width="1" height="1" fill="#000"/><rect x="314" y="93" width="1" height="1" fill="#fff"/><rect x="315" y="93" width="1" height="1" fill="#000"/><rect x="316" y="93" width="2" height="1" fill="#fff"/><rect x="318" y="93" width="1" height="1" fill="#000"/><rect x="308" y="94" width="2" height="1" fill="#000"/><rect x="310" y="94" width="7" height="1" fill="#fff"/><rect x="317" y="94" width="2" height="1" fill="#000"/><rect x="309" y="95" width="9" height="1" fill="#000"/><rect x="326" y="81" width="4" height="1" fill="#000"/><rect x="338" y="81" width="4" height="1" fill="#000"/><rect x="326" y="82" width="3" height="1" fill="#000"/><rect x="339" y="82" width="3" height="1" fill="#000"/><rect x="326" y="83" width="2" height="1" fill="#000"/><rect x="329" y="83" width="1" height="1" fill="#000"/><rect x="338" y="83" width="1" height="1" fill="#000"/><rect x="340" y="83" width="2" height="1" fill="#000"/><rect x="326" y="84" width="1" height="1" fill="#000"/><rect x="330" y="84" width="1" height="1" fill="#000"/><rect x="337" y="84" width="1" height="1" fill="#000"/><rect x="341" y="84" width="1" height="1" fill="#000"/><rect x="326" y="85" width="1" height="1" fill="#000"/><rect x="331" y="85" width="1" height="1" fill="#000"/><rect x="336" y="85" width="1" height="1" fill="#000"/><rect x="341" y="85" width="1" height="1" fill="#000"/><rect x="331" y="86" width="6" height="1" fill="#000"/><rect x="331" y="87" width="1" height="1" fill="#000"/><rect x="332" y="87" width="4" height="1" fill="#fff"/><rect x="336" y="87" width="1" height="1" fill="#000"/><rect x="331" y="88" width="1" height="1" fill="#000"/><rect x="332" y="88" width="4" height="1" fill="#fff"/><rect x="336" y="88" width="1" height="1" fill="#000"/><rect x="331" y="89" width="1" height="1" fill="#000"/><rect x="332" y="89" width="4" height="1" fill="#fff"/><rect x="336" y="89" width="1" height="1" fill="#000"/><rect x="331" y="90" width="1" height="1" fill="#000"/><rect x="332" y="90" width="4" height="1" fill="#fff"/><rect x="336" y="90" width="1" height="1" fill="#000"/><rect x="331" y="91" width="6" height="1" fill="#000"/><rect x="326" y="92" width="1" height="1" fill="#000"/><rect x="331" y="92" width="1" height="1" fill="#000"/><rect x="336" y="92" width="1" height="1" fill="#000"/><rect x="341" y="92" width="1" height="1" fill="#000"/><rect x="326" y="93" width="1" height="1" fill="#000"/><rect x="330" y="93" width="1" height="1" fill="#000"/><rect x="337" y="93" width="1" height="1" fill="#000"/><rect x="341" y="93" width="1" height="1" fill="#000"/><rect x="326" y="94" width="2" height="1" fill="#000"/><rect x="329" y="94" width="1" height="1" fill="#000"/><rect x="338" y="94" width="1" height="1" fill="#000"/><rect x="340" y="94" width="2" height="1" fill="#000"/><rect x="326" y="95" width="3" height="1" fill="#000"/><rect x="339" y="95" width="3" height="1" fill="#000"/><rect x="326" y="96" width="4" height="1" fill="#000"/><rect x="338" y="96" width="4" height="1" fill="#000"/><rect x="351" y="81" width="6" height="1" fill="#000"/><rect x="351" y="82" width="1" height="1" fill="#000"/><rect x="352" y="82" width="4" height="1" fill="#fff"/><rect x="356" y="82" width="1" height="1" fill="#000"/><rect x="351" y="83" width="1" height="1" fill="#000"/><rect x="352" y="83" width="4" height="1" fill="#fff"/><rect x="356" y="83" width="1" height="1" fill="#000"/><rect x="348" y="84" width="1" height="1" fill="#000"/><rect x="351" y="84" width="1" height="1" fill="#000"/><rect x="352" y="84" width="4" height="1" fill="#fff"/><rect x="356" y="84" width="1" height="1" fill="#000"/><rect x="359" y="84" width="1" height="1" fill="#000"/><rect x="347" y="85" width="1" height="1" fill="#000"/><rect x="351" y="85" width="1" height="1" fill="#000"/><rect x="352" y="85" width="4" height="1" fill="#fff"/><rect x="356" y="85" width="1" height="1" fill="#000"/><rect x="360" y="85" width="1" height="1" fill="#000"/><rect x="346" y="86" width="6" height="1" fill="#000"/><rect x="352" y="86" width="4" height="1" fill="#fff"/><rect x="356" y="86" width="6" height="1" fill="#000"/><rect x="347" y="87" width="1" height="1" fill="#000"/><rect x="351" y="87" width="1" height="1" fill="#000"/><rect x="352" y="87" width="4" height="1" fill="#fff"/><rect x="356" y="87" width="1" height="1" fill="#000"/><rect x="360" y="87" width="1" height="1" fill="#000"/><rect x="348" y="88" width="1" height="1" fill="#000"/><rect x="351" y="88" width="1" height="1" fill="#000"/><rect x="352" y="88" width="4" height="1" fill="#fff"/><rect x="356" y="88" width="1" height="1" fill="#000"/><rect x="359" y="88" width="1" height="1" fill="#000"/><rect x="351" y="89" width="1" height="1" fill="#000"/><rect x="352" y="89" width="4" height="1" fill="#fff"/><rect x="356" y="89" width="1" height="1" fill="#000"/><rect x="351" y="90" width="1" height="1" fill="#000"/><rect x="352" y="90" width="4" height="1" fill="#fff"/><rect x="356" y="90" width="1" height="1" fill="#000"/><rect x="351" y="91" width="1" height="1" fill="#000"/><rect x="352" y="91" width="4" height="1" fill="#fff"/><rect x="356" y="91" width="1" height="1" fill="#000"/><rect x="351" y="92" width="1" height="1" fill="#000"/><rect x="352" y="92" width="4" height="1" fill="#fff"/><rect x="356" y="92" width="1" height="1" fill="#000"/><rect x="351" y="93" width="1" height="1" fill="#000"/><rect x="352" y="93" width="4" height="1" fill="#fff"/><rect x="356" y="93" width="1" height="1" fill="#000"/><rect x="351" y="94" width="1" height="1" fill="#000"/><rect x="352" y="94" width="4" height="1" fill="#fff"/><rect x="356" y="94" width="1" height="1" fill="#000"/><rect x="351" y="95" width="1" height="1" fill="#000"/><rect x="352" y="95" width="4" height="1" fill="#fff"/><rect x="356" y="95" width="1" height="1" fill="#000"/><rect x="351" y="96" width="6" height="1" fill="#000"/><rect x="373" y="81" width="1" height="1" fill="#000"/><rect x="372" y="82" width="3" height="1" fill="#000"/><rect x="371" y="83" width="1" height="1" fill="#000"/><rect x="373" y="83" width="1" height="1" fill="#000"/><rect x="375" y="83" width="1" height="1" fill="#000"/><rect x="373" y="84" width="1" height="1" fill="#000"/><rect x="373" y="85" width="1" height="1" fill="#000"/><rect x="367" y="86" width="14" height="1" fill="#000"/><rect x="367" y="87" width="1" height="1" fill="#000"/><rect x="368" y="87" width="12" height="1" fill="#fff"/><rect x="380" y="87" width="1" height="1" fill="#000"/><rect x="367" y="88" width="1" height="1" fill="#000"/><rect x="368" y="88" width="12" height="1" fill="#fff"/><rect x="380" y="88" width="1" height="1" fill="#000"/><rect x="367" y="89" width="1" height="1" fill="#000"/><rect x="368" y="89" width="12" height="1" fill="#fff"/><rect x="380" y="89" width="1" height="1" fill="#000"/><rect x="367" y="90" width="1" height="1" fill="#000"/><rect x="368" y="90" width="12" height="1" fill="#fff"/><rect x="380" y="90" width="1" height="1" fill="#000"/><rect x="367" y="91" width="14" height="1" fill="#000"/><rect x="373" y="92" width="1" height="1" fill="#000"/><rect x="373" y="93" width="1" height="1" fill="#000"/><rect x="371" y="94" width="1" height="1" fill="#000"/><rect x="373" y="94" width="1" height="1" fill="#000"/><rect x="375" y="94" width="1" height="1" fill="#000"/><rect x="372" y="95" width="3" height="1" fill="#000"/><rect x="373" y="96" width="1" height="1" fill="#000"/><rect x="386" y="81" width="16" height="1" fill="#000"/><rect x="386" y="82" width="2" height="1" fill="#000"/><rect x="388" y="82" width="12" height="1" fill="#fff"/><rect x="400" y="82" width="2" height="1" fill="#000"/><rect x="386" y="83" width="1" height="1" fill="#000"/><rect x="387" y="83" width="1" height="1" fill="#fff"/><rect x="388" y="83" width="1" height="1" fill="#000"/><rect x="389" y="83" width="9" height="1" fill="#fff"/><rect x="398" y="83" width="1" height="1" fill="#000"/><rect x="399" y="83" width="2" height="1" fill="#fff"/><rect x="401" y="83" width="1" height="1" fill="#000"/><rect x="386" y="84" width="1" height="1" fill="#000"/><rect x="387" y="84" width="2" height="1" fill="#fff"/><rect x="389" y="84" width="1" height="1" fill="#000"/><rect x="390" y="84" width="2" height="1" fill="#fff"/><rect x="392" y="84" width="1" height="1" fill="#000"/><rect x="393" y="84" width="2" height="1" fill="#fff"/><rect x="395" y="84" width="1" height="1" fill="#000"/><rect x="396" y="84" width="2" height="1" fill="#fff"/><rect x="398" y="84" width="1" height="1" fill="#000"/><rect x="399" y="84" width="2" height="1" fill="#fff"/><rect x="401" y="84" width="1" height="1" fill="#000"/><rect x="386" y="85" width="1" height="1" fill="#000"/><rect x="387" y="85" width="3" height="1" fill="#fff"/><rect x="390" y="85" width="1" height="1" fill="#000"/><rect x="391" y="85" width="1" height="1" fill="#fff"/><rect x="392" y="85" width="1" height="1" fill="#000"/><rect x="393" y="85" width="2" height="1" fill="#fff"/><rect x="395" y="85" width="1" height="1" fill="#000"/><rect x="396" y="85" width="1" height="1" fill="#fff"/><rect x="397" y="85" width="1" height="1" fill="#000"/><rect x="398" y="85" width="3" height="1" fill="#fff"/><rect x="401" y="85" width="1" height="1" fill="#000"/><rect x="386" y="86" width="1" height="1" fill="#000"/><rect x="387" y="86" width="4" height="1" fill="#fff"/><rect x="391" y="86" width="2" height="1" fill="#000"/><rect x="393" y="86" width="2" height="1" fill="#fff"/><rect x="395" y="86" width="2" height="1" fill="#000"/><rect x="397" y="86" width="4" height="1" fill="#fff"/><rect x="401" y="86" width="1" height="1" fill="#000"/><rect x="386" y="87" width="1" height="1" fill="#000"/><rect x="387" y="87" width="2" height="1" fill="#fff"/><rect x="389" y="87" width="4" height="1" fill="#000"/><rect x="393" y="87" width="2" height="1" fill="#fff"/><rect x="395" y="87" width="4" height="1" fill="#000"/><rect x="399" y="87" width="2" height="1" fill="#fff"/><rect x="401" y="87" width="1" height="1" fill="#000"/><rect x="386" y="88" width="1" height="1" fill="#000"/><rect x="387" y="88" width="14" height="1" fill="#fff"/><rect x="401" y="88" width="1" height="1" fill="#000"/><rect x="386" y="89" width="1" height="1" fill="#000"/><rect x="387" y="89" width="14" height="1" fill="#fff"/><rect x="401" y="89" width="1" height="1" fill="#000"/><rect x="386" y="90" width="1" height="1" fill="#000"/><rect x="387" y="90" width="2" height="1" fill="#fff"/><rect x="389" y="90" width="4" height="1" fill="#000"/><rect x="393" y="90" width="2" height="1" fill="#fff"/><rect x="395" y="90" width="4" height="1" fill="#000"/><rect x="399" y="90" width="2" height="1" fill="#fff"/><rect x="401" y="90" width="1" height="1" fill="#000"/><rect x="386" y="91" width="1" height="1" fill="#000"/><rect x="387" y="91" width="4" height="1" fill="#fff"/><rect x="391" y="91" width="2" height="1" fill="#000"/><rect x="393" y="91" width="2" height="1" fill="#fff"/><rect x="395" y="91" width="2" height="1" fill="#000"/><rect x="397" y="91" width="4" height="1" fill="#fff"/><rect x="401" y="91" width="1" height="1" fill="#000"/><rect x="386" y="92" width="1" height="1" fill="#000"/><rect x="387" y="92" width="3" height="1" fill="#fff"/><rect x="390" y="92" width="1" height="1" fill="#000"/><rect x="391" y="92" width="1" height="1" fill="#fff"/><rect x="392" y="92" width="1" height="1" fill="#000"/><rect x="393" y="92" width="2" height="1" fill="#fff"/><rect x="395" y="92" width="1" height="1" fill="#000"/><rect x="396" y="92" width="1" height="1" fill="#fff"/><rect x="397" y="92" width="1" height="1" fill="#000"/><rect x="398" y="92" width="3" height="1" fill="#fff"/><rect x="401" y="92" width="1" height="1" fill="#000"/><rect x="386" y="93" width="1" height="1" fill="#000"/><rect x="387" y="93" width="2" height="1" fill="#fff"/><rect x="389" y="93" width="1" height="1" fill="#000"/><rect x="390" y="93" width="2" height="1" fill="#fff"/><rect x="392" y="93" width="1" height="1" fill="#000"/><rect x="393" y="93" width="2" height="1" fill="#fff"/><rect x="395" y="93" width="1" height="1" fill="#000"/><rect x="396" y="93" width="2" height="1" fill="#fff"/><rect x="398" y="93" width="1" height="1" fill="#000"/><rect x="399" y="93" width="2" height="1" fill="#fff"/><rect x="401" y="93" width="1" height="1" fill="#000"/><rect x="386" y="94" width="1" height="1" fill="#000"/><rect x="387" y="94" width="1" height="1" fill="#fff"/><rect x="388" y="94" width="1" height="1" fill="#000"/><rect x="389" y="94" width="3" height="1" fill="#fff"/><rect x="392" y="94" width="1" height="1" fill="#000"/><rect x="393" y="94" width="2" height="1" fill="#fff"/><rect x="395" y="94" width="1" height="1" fill="#000"/><rect x="396" y="94" width="3" height="1" fill="#fff"/><rect x="399" y="94" width="1" height="1" fill="#000"/><rect x="400" y="94" width="1" height="1" fill="#fff"/><rect x="401" y="94" width="1" height="1" fill="#000"/><rect x="386" y="95" width="2" height="1" fill="#000"/><rect x="388" y="95" width="12" height="1" fill="#fff"/><rect x="400" y="95" width="2" height="1" fill="#000"/><rect x="386" y="96" width="16" height="1" fill="#000"/><rect x="1180" y="82" width="99" height="1" fill="#6a6a6a"/><rect x="1180" y="82" width="1" height="14" fill="#6a6a6a"/><rect x="1181" y="83" width="97" height="1" fill="#fff"/><rect x="1181" y="83" width="1" height="13" fill="#fff"/><rect x="1182" y="95" width="78" height="1" fill="#6a6a6a"/><rect x="1260" y="83" width="1" height="13" fill="#6a6a6a"/><rect x="1181" y="96" width="98" height="1" fill="#fff"/><rect x="1261" y="83" width="1" height="13" fill="#fff"/><rect x="1262" y="95" width="16" height="1" fill="#6a6a6a"/><rect x="1278" y="82" width="1" height="14" fill="#6a6a6a"/><rect x="1182" y="84" width="48" height="10" rx="2" fill="#00cc66" shape-rendering="auto"/><path d="M1265 86h10l-5 6z" fill="#222" shape-rendering="auto"/></svg>
<div class="a" style="left:77px;top:144px;font-size:16px;line-height:20px;color:#00ffff">INPUT</div>
<div class="a" style="left:76px;top:535px;font-size:16px;line-height:20px;color:#00cc66;letter-spacing:-0.4px">OUTPUT</div>
<div class="yl" style="top:147px">1.25</div><div class="yl" style="top:210px">1.0</div><div class="yl" style="top:273px">.75</div><div class="yl" style="top:336px">.5</div><div class="yl" style="top:399px">.25</div><div class="yl" style="top:462px">0</div><div class="yl" style="top:526px">&#8722;.25</div><div class="yl" style="top:538px">1.5</div><div class="yl" style="top:592px">1.25</div><div class="yl" style="top:646px">1.0</div><div class="yl" style="top:700px">.75</div><div class="yl" style="top:754px">.5</div><div class="yl" style="top:808px">.25</div><div class="yl" style="top:862px">0</div><div class="yl" style="top:917px">&#8722;.25</div><div class="xl" style="left:50px">0</div><div class="xl" style="left:288px">1</div><div class="xl" style="left:526px">2</div><div class="xl" style="left:764px">3</div><div class="xl" style="left:1002px">4</div><div class="xl" style="left:1240px">5</div>
<div class="a" style="left:7px;top:340px;width:28px;height:20px;transform:rotate(-90deg);font-size:16px;line-height:20px;white-space:nowrap">V (V)</div>
<div class="a" style="left:7px;top:731px;width:28px;height:20px;transform:rotate(-90deg);font-size:16px;line-height:20px;white-space:nowrap">V (V)</div>
<div class="a" style="left:631px;top:952px;font-size:17px;line-height:20px;letter-spacing:0.5px">time (ns)</div>
<div class="a" style="left:10px;top:952px;width:70px;height:21px;background:#fff;border-top:1px solid #000;border-left:1px solid #000;font-size:17px;line-height:20px;text-align:right;padding-right:4px;letter-spacing:0.6px;padding-top:1px">3.72ns</div>
<div class="a" style="left:80px;top:952px;width:106px;height:21px;background:#fff;border-top:1px solid #000;border-left:1px solid #000;font-size:17px;line-height:20px;text-align:right;padding-right:5px;padding-top:1px">1.1748V</div>
<!-- status bar -->
<div class="a" style="left:20px;top:977px;width:1px;height:21px;background:#fff"></div>
<div class="a" style="left:1051px;top:977px;width:1px;height:21px;background:#fff"></div>
<div class="a" style="left:6px;top:984px;width:8px;height:8px;border-radius:4px;background:radial-gradient(circle at 35% 35%,#8f8,#090 60%,#050)"></div>
<div class="a" style="left:25px;top:980px;font-size:12px;line-height:14px">&gt;</div>
<div class="a" style="left:0;top:998px;width:1280px;height:1px;background:#1c2128"></div><div class="a" style="left:0;top:999px;width:1280px;height:25px;background:#ede9e3"></div><div class="a tbb" style="left:1px;top:1001px;width:22px;height:22px"></div><svg class="a" style="left:3px;top:1002px" width="20" height="20">
<path d="M2 12l7-5l9 4l-7 5z" fill="#fff" stroke="#111" stroke-width="1"/>
<path d="M6 9l5-4l7 3l-5 4z" fill="#2a7ad8" stroke="#111" stroke-width="1"/>
<path d="M8 9l3-2l4 1.8l-3 2z" fill="#58c070"/>
<path d="M2 12l3 1l2-1.5l-3-1z" fill="#b08040"/>
<path d="M13 12.5l4 1.5l1-1l-3-1.2z" fill="#b08040"/>
<path d="M4 14v3l7 2l7-4v-2" fill="#ddd" stroke="#111" stroke-width="1"/>
</svg><div class="a" style="left:26px;top:1001px;width:6px;height:22px;background:repeating-linear-gradient(#b0a594 0 1px,transparent 1px 2px)"></div><div class="a tbb" style="left:35px;top:1001px;width:84px;height:22px"></div><svg class="a" style="left:41px;top:1003px;opacity:0.55" width="18" height="18">
<path d="M2 6l7-3l7 3v7l-7 4l-7-4z" fill="#c8c8c8" stroke="#222" stroke-width="1"/>
<path d="M2 6l7 3l7-3" fill="none" stroke="#222" stroke-width="0.8"/>
<path d="M9 9v8" stroke="#444" stroke-width="0.8"/>
<path d="M5 5.5l2.5-1l3 1.2l-2.5 1z" fill="#7a6a3a"/>
<rect x="11" y="11" width="3" height="2" fill="#fff"/>
</svg><div class="a tbt" style="left:64px;top:1004px">[FES ...</div><div class="a tbb" style="left:121px;top:1001px;width:84px;height:22px"></div><svg class="a" style="left:127px;top:1003px;opacity:0.55" width="18" height="18">
<path d="M2 6l7-3l7 3v7l-7 4l-7-4z" fill="#c8c8c8" stroke="#222" stroke-width="1"/>
<path d="M2 6l7 3l7-3" fill="none" stroke="#222" stroke-width="0.8"/>
<path d="M9 9v8" stroke="#444" stroke-width="0.8"/>
<path d="M5 5.5l2.5-1l3 1.2l-2.5 1z" fill="#7a6a3a"/>
<rect x="11" y="11" width="3" height="2" fill="#fff"/>
</svg><div class="a tbt" style="left:150px;top:1004px">[simu...</div><div class="a tbb" style="left:207px;top:1001px;width:84px;height:22px"></div><div class="a" style="left:214px;top:1005px;width:14px;height:13px;border-radius:2px;background:linear-gradient(#bdbdbd,#9a9a9a);border:1px solid #8a8a8a"></div><div class="a" style="left:216px;top:1007px;width:10px;height:8px;background:#7a807a"></div><div class="a tbt" style="left:236px;top:1004px">[Term...</div><div class="a tbb" style="left:292px;top:1001px;width:84px;height:22px"></div><div class="a" style="left:300px;top:1006px;width:15px;height:12px;border:1px solid #777;border-top:3px solid #8aa0c0;background:linear-gradient(#f4f4f4,#e0e0e0)"></div><div class="a tbt" style="left:321px;top:1004px">[icfb ...</div><div class="a tbb" style="left:378px;top:1001px;width:84px;height:22px"></div><div class="a" style="left:386px;top:1006px;width:15px;height:12px;border:1px solid #111;border-top:3px solid #2a4a78;background:linear-gradient(#f2f2f2,#d8d8d8);box-shadow:inset 0 1px 0 #fff"></div><div class="a tbt" style="left:407px;top:1004px">AND (...</div><div class="a tbb" style="left:464px;top:1001px;width:84px;height:22px"></div><div class="a" style="left:472px;top:1006px;width:15px;height:12px;border:1px solid #111;border-top:3px solid #2a4a78;background:linear-gradient(#f2f2f2,#d8d8d8);box-shadow:inset 0 1px 0 #fff"></div><div class="a tbt" style="left:493px;top:1004px">Virtuo...</div><div class="a tbb" style="left:549px;top:1001px;width:84px;height:22px"></div><div class="a" style="left:557px;top:1006px;width:15px;height:12px;border:1px solid #777;border-top:3px solid #8aa0c0;background:linear-gradient(#f4f4f4,#e0e0e0)"></div><div class="a tbt" style="left:578px;top:1004px">[/noki...</div><div class="a tbb" style="left:635px;top:1001px;width:84px;height:22px"></div><svg class="a" style="left:641px;top:1003px;opacity:0.6" width="18" height="18">
<defs><radialGradient id="ffg641" cx="0.45" cy="0.4" r="0.6"><stop offset="0" stop-color="#9ee8ff"/><stop offset="0.6" stop-color="#2a8ad8"/><stop offset="1" stop-color="#0a3a98"/></radialGradient></defs>
<circle cx="10.5" cy="8" r="6.2" fill="url(#ffg641)"/>
<path d="M2 1.5l2.5 2l2-0.5l1.5-0.5l1.5 2l1 1.5l-1.5 1l0.5 1.5l-2 1l1.5 1.5l2 0.5l1.5-0.8l1.5-1.5l1-1.8c0.5-1.5 0-3-1-4.5l1.5-0.5c1.8 1.5 2.5 4 2.3 6.5c-0.3 4-3.5 7-7.8 7c-4.5 0-8-3.5-8-8c0-2 0.5-3.5 1.5-5z" fill="#e8741a"/>
<path d="M14.2 3.5c1.6 1.5 2.4 3.5 2.2 6c-0.1 1.5-0.6 2.8-1.4 3.8c0.6-1.2 0.8-2.4 0.6-3.8c-0.2-2-0.8-4-1.4-6z" fill="#ffd030"/>
<path d="M5 7.5l2.5-0.5l1 1.2l-2 0.3z" fill="#f8b070"/>
<path d="M3 12c1.5 2.5 4 4 7 3.8" stroke="#c84a10" stroke-width="0.8" fill="none"/>
</svg><div class="a tbt" style="left:664px;top:1004px">[Jenni...</div><div class="a tbb" style="left:721px;top:1001px;width:84px;height:22px"></div><div class="a" style="left:729px;top:1006px;width:15px;height:12px;border:1px solid #111;border-top:3px solid #2a4a78;background:linear-gradient(#f2f2f2,#d8d8d8);box-shadow:inset 0 1px 0 #fff"></div><div class="a tbt" style="left:750px;top:1004px">Grap...</div><div class="a tbb" style="left:807px;top:1001px;width:84px;height:22px"></div><div class="a" style="left:815px;top:1006px;width:15px;height:12px;border:1px solid #111;border-top:3px solid #2a4a78;background:linear-gradient(#f2f2f2,#d8d8d8);box-shadow:inset 0 1px 0 #fff"></div><div class="a tbt" style="left:836px;top:1004px">Grap...</div><div class="a tbb" style="left:893px;top:1001px;width:84px;height:22px"></div><div class="a" style="left:901px;top:1006px;width:15px;height:12px;border:1px solid #111;border-top:3px solid #2a4a78;background:linear-gradient(#f2f2f2,#d8d8d8);box-shadow:inset 0 1px 0 #fff"></div><div class="a tbt" style="left:922px;top:1004px">LSW (...</div><div class="a tbb" style="left:978px;top:1001px;width:84px;height:22px"></div><svg class="a" style="left:984px;top:1003px;opacity:1" width="18" height="18">
<defs><radialGradient id="ffg984" cx="0.45" cy="0.4" r="0.6"><stop offset="0" stop-color="#9ee8ff"/><stop offset="0.6" stop-color="#2a8ad8"/><stop offset="1" stop-color="#0a3a98"/></radialGradient></defs>
<circle cx="10.5" cy="8" r="6.2" fill="url(#ffg984)"/>
<path d="M2 1.5l2.5 2l2-0.5l1.5-0.5l1.5 2l1 1.5l-1.5 1l0.5 1.5l-2 1l1.5 1.5l2 0.5l1.5-0.8l1.5-1.5l1-1.8c0.5-1.5 0-3-1-4.5l1.5-0.5c1.8 1.5 2.5 4 2.3 6.5c-0.3 4-3.5 7-7.8 7c-4.5 0-8-3.5-8-8c0-2 0.5-3.5 1.5-5z" fill="#e8741a"/>
<path d="M14.2 3.5c1.6 1.5 2.4 3.5 2.2 6c-0.1 1.5-0.6 2.8-1.4 3.8c0.6-1.2 0.8-2.4 0.6-3.8c-0.2-2-0.8-4-1.4-6z" fill="#ffd030"/>
<path d="M5 7.5l2.5-0.5l1 1.2l-2 0.3z" fill="#f8b070"/>
<path d="M3 12c1.5 2.5 4 4 7 3.8" stroke="#c84a10" stroke-width="0.8" fill="none"/>
</svg><div class="a tbt" style="left:1007px;top:1004px">Clock...</div><div class="a tbb act" style="left:1064px;top:1001px;width:84px;height:22px"></div><div class="a" style="left:1072px;top:1006px;width:15px;height:12px;border:1px solid #111;border-top:3px solid #2a4a78;background:linear-gradient(#f2f2f2,#d8d8d8);box-shadow:inset 0 1px 0 #fff"></div><div class="a tbt" style="left:1094px;top:1005px">Grap...</div><svg class="a" style="left:1153px;top:1002px" width="20" height="20">
<path d="M3 4.5l1.8 13c0.3 1.5 2.2 2 5.2 2s4.9-0.5 5.2-2l1.8-13z" fill="#c0c4c8" stroke="#666" stroke-width="0.8"/>
<ellipse cx="10" cy="4.5" rx="7.2" ry="2.6" fill="#9aa0a8" stroke="#5878a8" stroke-width="1.2"/>
<path d="M6 8l1 10M10 8v10.5M14 8l-1 10" stroke="#9aa" stroke-width="0.7"/>
</svg><div class="a" style="left:1175px;top:1002px;width:25px;height:20px;background:#9ccbf4;border-top:2px solid #3a78c0"></div><div class="a" style="left:1180px;top:1005px;width:14px;height:12px;border:1px solid #111;border-top:2px solid #2a4a78;background:linear-gradient(#f2f2f2,#d8d8d8)"></div><div class="a" style="left:1201px;top:1002px;width:25px;height:20px;background:#fff;border:1px solid #000"></div><svg class="a" style="left:1205px;top:1003px;opacity:1" width="18" height="18">
<path d="M2 6l7-3l7 3v7l-7 4l-7-4z" fill="#c8c8c8" stroke="#222" stroke-width="1"/>
<path d="M2 6l7 3l7-3" fill="none" stroke="#222" stroke-width="0.8"/>
<path d="M9 9v8" stroke="#444" stroke-width="0.8"/>
<path d="M5 5.5l2.5-1l3 1.2l-2.5 1z" fill="#7a6a3a"/>
<rect x="11" y="11" width="3" height="2" fill="#fff"/>
</svg><div class="a" style="left:1227px;top:1002px;width:25px;height:20px;background:#b5aa98"></div><div class="a" style="left:1253px;top:1002px;width:26px;height:20px;background:#b5aa98"></div>
</body></html>
